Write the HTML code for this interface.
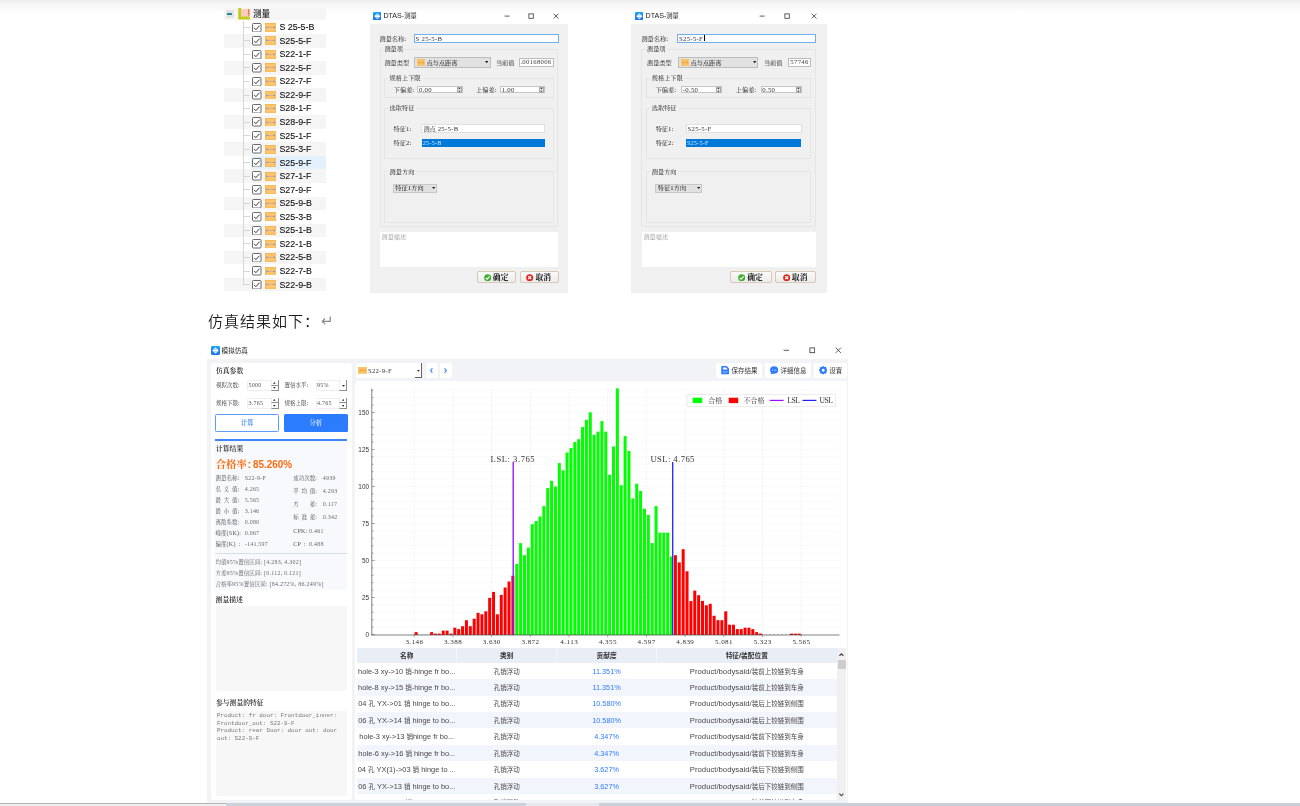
<!DOCTYPE html>
<html lang="zh-CN"><head><meta charset="utf-8"><title>仿真结果</title>
<style>
html,body{margin:0;padding:0;background:#fff;}
body{width:1300px;height:806px;position:relative;overflow:hidden;font-family:"Liberation Sans","Noto Sans CJK SC",sans-serif;}
#page{will-change:transform;position:absolute;left:0;top:0;width:1300px;height:806px;overflow:hidden;background:linear-gradient(#eeeeee 0,#f5f5f5 4px,#fbfbfb 9px,#fff 14px);}
#page div,#page span,#page svg{position:absolute;box-sizing:border-box;}
.t{white-space:nowrap;margin:0;padding:0;}
.fs{font-family:"Liberation Sans","Noto Sans CJK SC",sans-serif;}
.fr{font-family:"Liberation Serif","Noto Serif CJK SC",serif;}
.fm{font-family:"Liberation Mono","Noto Sans CJK SC",monospace;}
#page .a{position:static;}
.fr .a{font-size:1.09em;letter-spacing:0.04em;vertical-align:-0.03em;}
.fs .a{font-size:1.13em;}
.tb .a{font-size:1.19em;}
.tb .c1 .a{font-size:1.14em;}
.tb .c3 .a{font-size:1.12em;}
</style></head><body><div id="page">

<!-- measurement tree -->
<div style="left:224.20px;top:7.80px;width:102.30px;height:12.70px;background:#f5f5f5;"></div>
<div style="left:225.70px;top:10.30px;width:8.20px;height:8.00px;background:#e2e2e2;border-radius:1.2px;"></div>
<div style="left:227.30px;top:12.90px;width:5.20px;height:2.10px;background:#1b8a9d;border-radius:0.5px;"></div>
<svg style="left:238px;top:8.2px;width:12.4px;height:11.6px" viewBox="0 0 12.4 11.6"><rect x="2.8" y="1" width="8.6" height="7.8" fill="#fccbbd"/><path d="M0.2 0 H3.1 V8.6 H12.2 V11.4 H0.2 Z" fill="#c3cd1c"/><rect x="10.2" y="1" width="1.3" height="6.6" fill="#ee6a3c"/></svg>
<span class="t fs" style="top:8.28px;font-size:8.6px;line-height:12.04px;color:#222;left:253.00px;font-weight:500;">测量</span>
<div style="left:224.20px;top:34.04px;width:102.30px;height:13.54px;background:#f5f5f5;"></div>
<div style="left:224.20px;top:61.12px;width:102.30px;height:13.54px;background:#f5f5f5;"></div>
<div style="left:224.20px;top:88.20px;width:102.30px;height:13.54px;background:#f5f5f5;"></div>
<div style="left:224.20px;top:115.28px;width:102.30px;height:13.54px;background:#f5f5f5;"></div>
<div style="left:224.20px;top:142.36px;width:102.30px;height:13.54px;background:#f5f5f5;"></div>
<div style="left:251.20px;top:155.90px;width:75.30px;height:13.54px;background:#e3f1fd;"></div>
<div style="left:224.20px;top:169.44px;width:102.30px;height:13.54px;background:#f5f5f5;"></div>
<div style="left:224.20px;top:196.52px;width:102.30px;height:13.54px;background:#f5f5f5;"></div>
<div style="left:224.20px;top:223.60px;width:102.30px;height:13.54px;background:#f5f5f5;"></div>
<div style="left:224.20px;top:250.68px;width:102.30px;height:13.54px;background:#f5f5f5;"></div>
<div style="left:224.20px;top:277.76px;width:102.30px;height:13.54px;background:#f5f5f5;"></div>
<div style="left:242.80px;top:20.50px;width:0.90px;height:264.03px;background:#d9d5d0;"></div>
<div style="left:243.20px;top:26.82px;width:7.20px;height:0.90px;background:#d9d5d0;"></div>
<svg style="left:252.1px;top:22.52px;width:9.5px;height:9.5px" viewBox="0 0 9.5 9.5"><rect x="0.5" y="0.5" width="8.5" height="8.5" rx="0.8" fill="#fff" stroke="#5a5a5a" stroke-width="0.9"/><path d="M2.1 4.9 L3.9 6.7 L7.5 2.7" fill="none" stroke="#333" stroke-width="1"/></svg>
<svg style="left:264.7px;top:22.87px;width:11.3px;height:8.8px" viewBox="0 0 11.3 8.8"><rect x="0" y="0" width="11.3" height="8.8" fill="#fdc56c"/><rect x="0.3" y="0.3" width="10.7" height="8.2" fill="none" stroke="#f3ad45" stroke-width="0.6"/><path d="M2.6 4.4 H8.7" stroke="#a99ac0" stroke-width="0.6"/><path d="M1.5 3.2 L3.2 4.4 L1.5 5.6 Z M9.8 3.2 L8.1 4.4 L9.8 5.6 Z" fill="#8f86c8"/></svg>
<span class="t fs" style="top:21.24px;font-size:8.9px;line-height:12.46px;color:#101010;left:279.40px;-webkit-text-stroke:0.1px #101010;">S 25-5-B</span>
<div style="left:243.20px;top:40.36px;width:7.20px;height:0.90px;background:#d9d5d0;"></div>
<svg style="left:252.1px;top:36.06px;width:9.5px;height:9.5px" viewBox="0 0 9.5 9.5"><rect x="0.5" y="0.5" width="8.5" height="8.5" rx="0.8" fill="#fff" stroke="#5a5a5a" stroke-width="0.9"/><path d="M2.1 4.9 L3.9 6.7 L7.5 2.7" fill="none" stroke="#333" stroke-width="1"/></svg>
<svg style="left:264.7px;top:36.41px;width:11.3px;height:8.8px" viewBox="0 0 11.3 8.8"><rect x="0" y="0" width="11.3" height="8.8" fill="#fdc56c"/><rect x="0.3" y="0.3" width="10.7" height="8.2" fill="none" stroke="#f3ad45" stroke-width="0.6"/><path d="M2.6 4.4 H8.7" stroke="#a99ac0" stroke-width="0.6"/><path d="M1.5 3.2 L3.2 4.4 L1.5 5.6 Z M9.8 3.2 L8.1 4.4 L9.8 5.6 Z" fill="#8f86c8"/></svg>
<span class="t fs" style="top:34.78px;font-size:8.9px;line-height:12.46px;color:#101010;left:279.40px;-webkit-text-stroke:0.1px #101010;">S25-5-F</span>
<div style="left:243.20px;top:53.90px;width:7.20px;height:0.90px;background:#d9d5d0;"></div>
<svg style="left:252.1px;top:49.60px;width:9.5px;height:9.5px" viewBox="0 0 9.5 9.5"><rect x="0.5" y="0.5" width="8.5" height="8.5" rx="0.8" fill="#fff" stroke="#5a5a5a" stroke-width="0.9"/><path d="M2.1 4.9 L3.9 6.7 L7.5 2.7" fill="none" stroke="#333" stroke-width="1"/></svg>
<svg style="left:264.7px;top:49.95px;width:11.3px;height:8.8px" viewBox="0 0 11.3 8.8"><rect x="0" y="0" width="11.3" height="8.8" fill="#fdc56c"/><rect x="0.3" y="0.3" width="10.7" height="8.2" fill="none" stroke="#f3ad45" stroke-width="0.6"/><path d="M2.6 4.4 H8.7" stroke="#a99ac0" stroke-width="0.6"/><path d="M1.5 3.2 L3.2 4.4 L1.5 5.6 Z M9.8 3.2 L8.1 4.4 L9.8 5.6 Z" fill="#8f86c8"/></svg>
<span class="t fs" style="top:48.32px;font-size:8.9px;line-height:12.46px;color:#101010;left:279.40px;-webkit-text-stroke:0.1px #101010;">S22-1-F</span>
<div style="left:243.20px;top:67.44px;width:7.20px;height:0.90px;background:#d9d5d0;"></div>
<svg style="left:252.1px;top:63.14px;width:9.5px;height:9.5px" viewBox="0 0 9.5 9.5"><rect x="0.5" y="0.5" width="8.5" height="8.5" rx="0.8" fill="#fff" stroke="#5a5a5a" stroke-width="0.9"/><path d="M2.1 4.9 L3.9 6.7 L7.5 2.7" fill="none" stroke="#333" stroke-width="1"/></svg>
<svg style="left:264.7px;top:63.49px;width:11.3px;height:8.8px" viewBox="0 0 11.3 8.8"><rect x="0" y="0" width="11.3" height="8.8" fill="#fdc56c"/><rect x="0.3" y="0.3" width="10.7" height="8.2" fill="none" stroke="#f3ad45" stroke-width="0.6"/><path d="M2.6 4.4 H8.7" stroke="#a99ac0" stroke-width="0.6"/><path d="M1.5 3.2 L3.2 4.4 L1.5 5.6 Z M9.8 3.2 L8.1 4.4 L9.8 5.6 Z" fill="#8f86c8"/></svg>
<span class="t fs" style="top:61.86px;font-size:8.9px;line-height:12.46px;color:#101010;left:279.40px;-webkit-text-stroke:0.1px #101010;">S22-5-F</span>
<div style="left:243.20px;top:80.98px;width:7.20px;height:0.90px;background:#d9d5d0;"></div>
<svg style="left:252.1px;top:76.68px;width:9.5px;height:9.5px" viewBox="0 0 9.5 9.5"><rect x="0.5" y="0.5" width="8.5" height="8.5" rx="0.8" fill="#fff" stroke="#5a5a5a" stroke-width="0.9"/><path d="M2.1 4.9 L3.9 6.7 L7.5 2.7" fill="none" stroke="#333" stroke-width="1"/></svg>
<svg style="left:264.7px;top:77.03px;width:11.3px;height:8.8px" viewBox="0 0 11.3 8.8"><rect x="0" y="0" width="11.3" height="8.8" fill="#fdc56c"/><rect x="0.3" y="0.3" width="10.7" height="8.2" fill="none" stroke="#f3ad45" stroke-width="0.6"/><path d="M2.6 4.4 H8.7" stroke="#a99ac0" stroke-width="0.6"/><path d="M1.5 3.2 L3.2 4.4 L1.5 5.6 Z M9.8 3.2 L8.1 4.4 L9.8 5.6 Z" fill="#8f86c8"/></svg>
<span class="t fs" style="top:75.40px;font-size:8.9px;line-height:12.46px;color:#101010;left:279.40px;-webkit-text-stroke:0.1px #101010;">S22-7-F</span>
<div style="left:243.20px;top:94.52px;width:7.20px;height:0.90px;background:#d9d5d0;"></div>
<svg style="left:252.1px;top:90.22px;width:9.5px;height:9.5px" viewBox="0 0 9.5 9.5"><rect x="0.5" y="0.5" width="8.5" height="8.5" rx="0.8" fill="#fff" stroke="#5a5a5a" stroke-width="0.9"/><path d="M2.1 4.9 L3.9 6.7 L7.5 2.7" fill="none" stroke="#333" stroke-width="1"/></svg>
<svg style="left:264.7px;top:90.57px;width:11.3px;height:8.8px" viewBox="0 0 11.3 8.8"><rect x="0" y="0" width="11.3" height="8.8" fill="#fdc56c"/><rect x="0.3" y="0.3" width="10.7" height="8.2" fill="none" stroke="#f3ad45" stroke-width="0.6"/><path d="M2.6 4.4 H8.7" stroke="#a99ac0" stroke-width="0.6"/><path d="M1.5 3.2 L3.2 4.4 L1.5 5.6 Z M9.8 3.2 L8.1 4.4 L9.8 5.6 Z" fill="#8f86c8"/></svg>
<span class="t fs" style="top:88.94px;font-size:8.9px;line-height:12.46px;color:#101010;left:279.40px;-webkit-text-stroke:0.1px #101010;">S22-9-F</span>
<div style="left:243.20px;top:108.06px;width:7.20px;height:0.90px;background:#d9d5d0;"></div>
<svg style="left:252.1px;top:103.76px;width:9.5px;height:9.5px" viewBox="0 0 9.5 9.5"><rect x="0.5" y="0.5" width="8.5" height="8.5" rx="0.8" fill="#fff" stroke="#5a5a5a" stroke-width="0.9"/><path d="M2.1 4.9 L3.9 6.7 L7.5 2.7" fill="none" stroke="#333" stroke-width="1"/></svg>
<svg style="left:264.7px;top:104.11px;width:11.3px;height:8.8px" viewBox="0 0 11.3 8.8"><rect x="0" y="0" width="11.3" height="8.8" fill="#fdc56c"/><rect x="0.3" y="0.3" width="10.7" height="8.2" fill="none" stroke="#f3ad45" stroke-width="0.6"/><path d="M2.6 4.4 H8.7" stroke="#a99ac0" stroke-width="0.6"/><path d="M1.5 3.2 L3.2 4.4 L1.5 5.6 Z M9.8 3.2 L8.1 4.4 L9.8 5.6 Z" fill="#8f86c8"/></svg>
<span class="t fs" style="top:102.48px;font-size:8.9px;line-height:12.46px;color:#101010;left:279.40px;-webkit-text-stroke:0.1px #101010;">S28-1-F</span>
<div style="left:243.20px;top:121.60px;width:7.20px;height:0.90px;background:#d9d5d0;"></div>
<svg style="left:252.1px;top:117.30px;width:9.5px;height:9.5px" viewBox="0 0 9.5 9.5"><rect x="0.5" y="0.5" width="8.5" height="8.5" rx="0.8" fill="#fff" stroke="#5a5a5a" stroke-width="0.9"/><path d="M2.1 4.9 L3.9 6.7 L7.5 2.7" fill="none" stroke="#333" stroke-width="1"/></svg>
<svg style="left:264.7px;top:117.65px;width:11.3px;height:8.8px" viewBox="0 0 11.3 8.8"><rect x="0" y="0" width="11.3" height="8.8" fill="#fdc56c"/><rect x="0.3" y="0.3" width="10.7" height="8.2" fill="none" stroke="#f3ad45" stroke-width="0.6"/><path d="M2.6 4.4 H8.7" stroke="#a99ac0" stroke-width="0.6"/><path d="M1.5 3.2 L3.2 4.4 L1.5 5.6 Z M9.8 3.2 L8.1 4.4 L9.8 5.6 Z" fill="#8f86c8"/></svg>
<span class="t fs" style="top:116.02px;font-size:8.9px;line-height:12.46px;color:#101010;left:279.40px;-webkit-text-stroke:0.1px #101010;">S28-9-F</span>
<div style="left:243.20px;top:135.14px;width:7.20px;height:0.90px;background:#d9d5d0;"></div>
<svg style="left:252.1px;top:130.84px;width:9.5px;height:9.5px" viewBox="0 0 9.5 9.5"><rect x="0.5" y="0.5" width="8.5" height="8.5" rx="0.8" fill="#fff" stroke="#5a5a5a" stroke-width="0.9"/><path d="M2.1 4.9 L3.9 6.7 L7.5 2.7" fill="none" stroke="#333" stroke-width="1"/></svg>
<svg style="left:264.7px;top:131.19px;width:11.3px;height:8.8px" viewBox="0 0 11.3 8.8"><rect x="0" y="0" width="11.3" height="8.8" fill="#fdc56c"/><rect x="0.3" y="0.3" width="10.7" height="8.2" fill="none" stroke="#f3ad45" stroke-width="0.6"/><path d="M2.6 4.4 H8.7" stroke="#a99ac0" stroke-width="0.6"/><path d="M1.5 3.2 L3.2 4.4 L1.5 5.6 Z M9.8 3.2 L8.1 4.4 L9.8 5.6 Z" fill="#8f86c8"/></svg>
<span class="t fs" style="top:129.56px;font-size:8.9px;line-height:12.46px;color:#101010;left:279.40px;-webkit-text-stroke:0.1px #101010;">S25-1-F</span>
<div style="left:243.20px;top:148.68px;width:7.20px;height:0.90px;background:#d9d5d0;"></div>
<svg style="left:252.1px;top:144.38px;width:9.5px;height:9.5px" viewBox="0 0 9.5 9.5"><rect x="0.5" y="0.5" width="8.5" height="8.5" rx="0.8" fill="#fff" stroke="#5a5a5a" stroke-width="0.9"/><path d="M2.1 4.9 L3.9 6.7 L7.5 2.7" fill="none" stroke="#333" stroke-width="1"/></svg>
<svg style="left:264.7px;top:144.73px;width:11.3px;height:8.8px" viewBox="0 0 11.3 8.8"><rect x="0" y="0" width="11.3" height="8.8" fill="#fdc56c"/><rect x="0.3" y="0.3" width="10.7" height="8.2" fill="none" stroke="#f3ad45" stroke-width="0.6"/><path d="M2.6 4.4 H8.7" stroke="#a99ac0" stroke-width="0.6"/><path d="M1.5 3.2 L3.2 4.4 L1.5 5.6 Z M9.8 3.2 L8.1 4.4 L9.8 5.6 Z" fill="#8f86c8"/></svg>
<span class="t fs" style="top:143.10px;font-size:8.9px;line-height:12.46px;color:#101010;left:279.40px;-webkit-text-stroke:0.1px #101010;">S25-3-F</span>
<div style="left:243.20px;top:162.22px;width:7.20px;height:0.90px;background:#d9d5d0;"></div>
<svg style="left:252.1px;top:157.92px;width:9.5px;height:9.5px" viewBox="0 0 9.5 9.5"><rect x="0.5" y="0.5" width="8.5" height="8.5" rx="0.8" fill="#fff" stroke="#5a5a5a" stroke-width="0.9"/><path d="M2.1 4.9 L3.9 6.7 L7.5 2.7" fill="none" stroke="#333" stroke-width="1"/></svg>
<svg style="left:264.7px;top:158.27px;width:11.3px;height:8.8px" viewBox="0 0 11.3 8.8"><rect x="0" y="0" width="11.3" height="8.8" fill="#fdc56c"/><rect x="0.3" y="0.3" width="10.7" height="8.2" fill="none" stroke="#f3ad45" stroke-width="0.6"/><path d="M2.6 4.4 H8.7" stroke="#a99ac0" stroke-width="0.6"/><path d="M1.5 3.2 L3.2 4.4 L1.5 5.6 Z M9.8 3.2 L8.1 4.4 L9.8 5.6 Z" fill="#8f86c8"/></svg>
<span class="t fs" style="top:156.64px;font-size:8.9px;line-height:12.46px;color:#101010;left:279.40px;-webkit-text-stroke:0.1px #101010;">S25-9-F</span>
<div style="left:243.20px;top:175.76px;width:7.20px;height:0.90px;background:#d9d5d0;"></div>
<svg style="left:252.1px;top:171.46px;width:9.5px;height:9.5px" viewBox="0 0 9.5 9.5"><rect x="0.5" y="0.5" width="8.5" height="8.5" rx="0.8" fill="#fff" stroke="#5a5a5a" stroke-width="0.9"/><path d="M2.1 4.9 L3.9 6.7 L7.5 2.7" fill="none" stroke="#333" stroke-width="1"/></svg>
<svg style="left:264.7px;top:171.81px;width:11.3px;height:8.8px" viewBox="0 0 11.3 8.8"><rect x="0" y="0" width="11.3" height="8.8" fill="#fdc56c"/><rect x="0.3" y="0.3" width="10.7" height="8.2" fill="none" stroke="#f3ad45" stroke-width="0.6"/><path d="M2.6 4.4 H8.7" stroke="#a99ac0" stroke-width="0.6"/><path d="M1.5 3.2 L3.2 4.4 L1.5 5.6 Z M9.8 3.2 L8.1 4.4 L9.8 5.6 Z" fill="#8f86c8"/></svg>
<span class="t fs" style="top:170.18px;font-size:8.9px;line-height:12.46px;color:#101010;left:279.40px;-webkit-text-stroke:0.1px #101010;">S27-1-F</span>
<div style="left:243.20px;top:189.30px;width:7.20px;height:0.90px;background:#d9d5d0;"></div>
<svg style="left:252.1px;top:185.00px;width:9.5px;height:9.5px" viewBox="0 0 9.5 9.5"><rect x="0.5" y="0.5" width="8.5" height="8.5" rx="0.8" fill="#fff" stroke="#5a5a5a" stroke-width="0.9"/><path d="M2.1 4.9 L3.9 6.7 L7.5 2.7" fill="none" stroke="#333" stroke-width="1"/></svg>
<svg style="left:264.7px;top:185.35px;width:11.3px;height:8.8px" viewBox="0 0 11.3 8.8"><rect x="0" y="0" width="11.3" height="8.8" fill="#fdc56c"/><rect x="0.3" y="0.3" width="10.7" height="8.2" fill="none" stroke="#f3ad45" stroke-width="0.6"/><path d="M2.6 4.4 H8.7" stroke="#a99ac0" stroke-width="0.6"/><path d="M1.5 3.2 L3.2 4.4 L1.5 5.6 Z M9.8 3.2 L8.1 4.4 L9.8 5.6 Z" fill="#8f86c8"/></svg>
<span class="t fs" style="top:183.72px;font-size:8.9px;line-height:12.46px;color:#101010;left:279.40px;-webkit-text-stroke:0.1px #101010;">S27-9-F</span>
<div style="left:243.20px;top:202.84px;width:7.20px;height:0.90px;background:#d9d5d0;"></div>
<svg style="left:252.1px;top:198.54px;width:9.5px;height:9.5px" viewBox="0 0 9.5 9.5"><rect x="0.5" y="0.5" width="8.5" height="8.5" rx="0.8" fill="#fff" stroke="#5a5a5a" stroke-width="0.9"/><path d="M2.1 4.9 L3.9 6.7 L7.5 2.7" fill="none" stroke="#333" stroke-width="1"/></svg>
<svg style="left:264.7px;top:198.89px;width:11.3px;height:8.8px" viewBox="0 0 11.3 8.8"><rect x="0" y="0" width="11.3" height="8.8" fill="#fdc56c"/><rect x="0.3" y="0.3" width="10.7" height="8.2" fill="none" stroke="#f3ad45" stroke-width="0.6"/><path d="M2.6 4.4 H8.7" stroke="#a99ac0" stroke-width="0.6"/><path d="M1.5 3.2 L3.2 4.4 L1.5 5.6 Z M9.8 3.2 L8.1 4.4 L9.8 5.6 Z" fill="#8f86c8"/></svg>
<span class="t fs" style="top:197.26px;font-size:8.9px;line-height:12.46px;color:#101010;left:279.40px;-webkit-text-stroke:0.1px #101010;">S25-9-B</span>
<div style="left:243.20px;top:216.38px;width:7.20px;height:0.90px;background:#d9d5d0;"></div>
<svg style="left:252.1px;top:212.08px;width:9.5px;height:9.5px" viewBox="0 0 9.5 9.5"><rect x="0.5" y="0.5" width="8.5" height="8.5" rx="0.8" fill="#fff" stroke="#5a5a5a" stroke-width="0.9"/><path d="M2.1 4.9 L3.9 6.7 L7.5 2.7" fill="none" stroke="#333" stroke-width="1"/></svg>
<svg style="left:264.7px;top:212.43px;width:11.3px;height:8.8px" viewBox="0 0 11.3 8.8"><rect x="0" y="0" width="11.3" height="8.8" fill="#fdc56c"/><rect x="0.3" y="0.3" width="10.7" height="8.2" fill="none" stroke="#f3ad45" stroke-width="0.6"/><path d="M2.6 4.4 H8.7" stroke="#a99ac0" stroke-width="0.6"/><path d="M1.5 3.2 L3.2 4.4 L1.5 5.6 Z M9.8 3.2 L8.1 4.4 L9.8 5.6 Z" fill="#8f86c8"/></svg>
<span class="t fs" style="top:210.80px;font-size:8.9px;line-height:12.46px;color:#101010;left:279.40px;-webkit-text-stroke:0.1px #101010;">S25-3-B</span>
<div style="left:243.20px;top:229.92px;width:7.20px;height:0.90px;background:#d9d5d0;"></div>
<svg style="left:252.1px;top:225.62px;width:9.5px;height:9.5px" viewBox="0 0 9.5 9.5"><rect x="0.5" y="0.5" width="8.5" height="8.5" rx="0.8" fill="#fff" stroke="#5a5a5a" stroke-width="0.9"/><path d="M2.1 4.9 L3.9 6.7 L7.5 2.7" fill="none" stroke="#333" stroke-width="1"/></svg>
<svg style="left:264.7px;top:225.97px;width:11.3px;height:8.8px" viewBox="0 0 11.3 8.8"><rect x="0" y="0" width="11.3" height="8.8" fill="#fdc56c"/><rect x="0.3" y="0.3" width="10.7" height="8.2" fill="none" stroke="#f3ad45" stroke-width="0.6"/><path d="M2.6 4.4 H8.7" stroke="#a99ac0" stroke-width="0.6"/><path d="M1.5 3.2 L3.2 4.4 L1.5 5.6 Z M9.8 3.2 L8.1 4.4 L9.8 5.6 Z" fill="#8f86c8"/></svg>
<span class="t fs" style="top:224.34px;font-size:8.9px;line-height:12.46px;color:#101010;left:279.40px;-webkit-text-stroke:0.1px #101010;">S25-1-B</span>
<div style="left:243.20px;top:243.46px;width:7.20px;height:0.90px;background:#d9d5d0;"></div>
<svg style="left:252.1px;top:239.16px;width:9.5px;height:9.5px" viewBox="0 0 9.5 9.5"><rect x="0.5" y="0.5" width="8.5" height="8.5" rx="0.8" fill="#fff" stroke="#5a5a5a" stroke-width="0.9"/><path d="M2.1 4.9 L3.9 6.7 L7.5 2.7" fill="none" stroke="#333" stroke-width="1"/></svg>
<svg style="left:264.7px;top:239.51px;width:11.3px;height:8.8px" viewBox="0 0 11.3 8.8"><rect x="0" y="0" width="11.3" height="8.8" fill="#fdc56c"/><rect x="0.3" y="0.3" width="10.7" height="8.2" fill="none" stroke="#f3ad45" stroke-width="0.6"/><path d="M2.6 4.4 H8.7" stroke="#a99ac0" stroke-width="0.6"/><path d="M1.5 3.2 L3.2 4.4 L1.5 5.6 Z M9.8 3.2 L8.1 4.4 L9.8 5.6 Z" fill="#8f86c8"/></svg>
<span class="t fs" style="top:237.88px;font-size:8.9px;line-height:12.46px;color:#101010;left:279.40px;-webkit-text-stroke:0.1px #101010;">S22-1-B</span>
<div style="left:243.20px;top:257.00px;width:7.20px;height:0.90px;background:#d9d5d0;"></div>
<svg style="left:252.1px;top:252.70px;width:9.5px;height:9.5px" viewBox="0 0 9.5 9.5"><rect x="0.5" y="0.5" width="8.5" height="8.5" rx="0.8" fill="#fff" stroke="#5a5a5a" stroke-width="0.9"/><path d="M2.1 4.9 L3.9 6.7 L7.5 2.7" fill="none" stroke="#333" stroke-width="1"/></svg>
<svg style="left:264.7px;top:253.05px;width:11.3px;height:8.8px" viewBox="0 0 11.3 8.8"><rect x="0" y="0" width="11.3" height="8.8" fill="#fdc56c"/><rect x="0.3" y="0.3" width="10.7" height="8.2" fill="none" stroke="#f3ad45" stroke-width="0.6"/><path d="M2.6 4.4 H8.7" stroke="#a99ac0" stroke-width="0.6"/><path d="M1.5 3.2 L3.2 4.4 L1.5 5.6 Z M9.8 3.2 L8.1 4.4 L9.8 5.6 Z" fill="#8f86c8"/></svg>
<span class="t fs" style="top:251.42px;font-size:8.9px;line-height:12.46px;color:#101010;left:279.40px;-webkit-text-stroke:0.1px #101010;">S22-5-B</span>
<div style="left:243.20px;top:270.54px;width:7.20px;height:0.90px;background:#d9d5d0;"></div>
<svg style="left:252.1px;top:266.24px;width:9.5px;height:9.5px" viewBox="0 0 9.5 9.5"><rect x="0.5" y="0.5" width="8.5" height="8.5" rx="0.8" fill="#fff" stroke="#5a5a5a" stroke-width="0.9"/><path d="M2.1 4.9 L3.9 6.7 L7.5 2.7" fill="none" stroke="#333" stroke-width="1"/></svg>
<svg style="left:264.7px;top:266.59px;width:11.3px;height:8.8px" viewBox="0 0 11.3 8.8"><rect x="0" y="0" width="11.3" height="8.8" fill="#fdc56c"/><rect x="0.3" y="0.3" width="10.7" height="8.2" fill="none" stroke="#f3ad45" stroke-width="0.6"/><path d="M2.6 4.4 H8.7" stroke="#a99ac0" stroke-width="0.6"/><path d="M1.5 3.2 L3.2 4.4 L1.5 5.6 Z M9.8 3.2 L8.1 4.4 L9.8 5.6 Z" fill="#8f86c8"/></svg>
<span class="t fs" style="top:264.96px;font-size:8.9px;line-height:12.46px;color:#101010;left:279.40px;-webkit-text-stroke:0.1px #101010;">S22-7-B</span>
<div style="left:243.20px;top:284.08px;width:7.20px;height:0.90px;background:#d9d5d0;"></div>
<svg style="left:252.1px;top:279.78px;width:9.5px;height:9.5px" viewBox="0 0 9.5 9.5"><rect x="0.5" y="0.5" width="8.5" height="8.5" rx="0.8" fill="#fff" stroke="#5a5a5a" stroke-width="0.9"/><path d="M2.1 4.9 L3.9 6.7 L7.5 2.7" fill="none" stroke="#333" stroke-width="1"/></svg>
<svg style="left:264.7px;top:280.13px;width:11.3px;height:8.8px" viewBox="0 0 11.3 8.8"><rect x="0" y="0" width="11.3" height="8.8" fill="#fdc56c"/><rect x="0.3" y="0.3" width="10.7" height="8.2" fill="none" stroke="#f3ad45" stroke-width="0.6"/><path d="M2.6 4.4 H8.7" stroke="#a99ac0" stroke-width="0.6"/><path d="M1.5 3.2 L3.2 4.4 L1.5 5.6 Z M9.8 3.2 L8.1 4.4 L9.8 5.6 Z" fill="#8f86c8"/></svg>
<span class="t fs" style="top:278.50px;font-size:8.9px;line-height:12.46px;color:#101010;left:279.40px;-webkit-text-stroke:0.1px #101010;">S22-9-B</span>
<!-- dialog S 25-5-B -->
<div style="left:370.20px;top:8.00px;width:198.00px;height:16.10px;"></div>
<div style="left:370.20px;top:24.10px;width:198.00px;height:268.50px;background:#f0f0f0;"></div>
<svg style="left:372.80px;top:11.50px;width:8.6px;height:8.6px" viewBox="0 0 10 10"><defs><linearGradient id="ig372" x1="0" y1="0" x2="0" y2="1"><stop offset="0" stop-color="#1aa6f7"/><stop offset="1" stop-color="#2470f1"/></linearGradient></defs><rect x="0" y="0" width="10" height="10" rx="1.5" fill="url(#ig372)"/><path d="M1.5 5 L5 1.5 L8.5 5 L5 8.5 Z" fill="#fff" fill-opacity="0.95"/><path d="M3.6 3.6 H6.4 M3.6 6.4 H6.4" stroke="#3d93f5" stroke-width="0.7"/><path d="M2.4 5 H7.6" stroke="#fff" stroke-width="1.5"/></svg>
<span class="t fs" style="top:11.59px;font-size:6.3px;line-height:8.82px;color:#222;left:383.40px;"><span class="a">DTAS-</span>测量</span>
<svg style="left:504.10px;top:12.90px;width:6.2px;height:6.2px" viewBox="-3.1 -3.1 6.2 6.2"><path d="M-2.5 0 H2.5" stroke="#333" stroke-width="0.8"/></svg>
<svg style="left:528.30px;top:12.90px;width:6.2px;height:6.2px" viewBox="-3.1 -3.1 6.2 6.2"><rect x="-2.2" y="-2.2" width="4.4" height="4.4" fill="none" stroke="#333" stroke-width="0.8"/></svg>
<svg style="left:553.30px;top:12.90px;width:6.2px;height:6.2px" viewBox="-3.1 -3.1 6.2 6.2"><path d="M-2.4000000000000004 -2.4000000000000004 L2.4000000000000004 2.4000000000000004 M2.4000000000000004 -2.4000000000000004 L-2.4000000000000004 2.4000000000000004" stroke="#333" stroke-width="0.8"/></svg>
<span class="t fr" style="top:34.62px;font-size:6.2px;line-height:8.68px;color:#1e1e1e;left:379.50px;">测量名称<span class="a">:</span></span>
<div style="left:413.50px;top:33.80px;width:145.00px;height:8.80px;background:#fff;border:1px solid #6fb0ec;"></div>
<span class="t fr" style="top:34.52px;font-size:6.2px;line-height:8.68px;color:#333;left:415.50px;"><span class="a">S 25-5-B</span></span>
<div style="left:379.70px;top:48.60px;width:178.80px;height:178.60px;border:1px solid #e5e5e5;border-radius:1px;"></div>
<div style="left:382.90px;top:44.60px;width:21.60px;height:8.00px;background:#f0f0f0;"></div>
<span class="t fr" style="top:44.82px;font-size:6.2px;line-height:8.68px;color:#1e1e1e;left:384.40px;">测量项</span>
<span class="t fr" style="top:58.92px;font-size:6.2px;line-height:8.68px;color:#1e1e1e;left:384.40px;">测量类型</span>
<div style="left:414.30px;top:57.00px;width:76.40px;height:11.00px;background:#e1e1e1;border:1px solid #bdbdbd;"></div>
<svg style="left:416.70px;top:59.10px;width:8.40px;height:7.00px" viewBox="0 0 11.4 10" preserveAspectRatio="none"><rect x="0" y="0" width="11.4" height="10" fill="#fdc266"/><path d="M2.2 5 H9.2 M2 3.6 L3.4 5 L2 6.4 M9.4 3.6 L8 5 L9.4 6.4" fill="none" stroke="#d98b2b" stroke-width="0.7"/></svg>
<span class="t fr" style="top:58.82px;font-size:6.2px;line-height:8.68px;color:#111;left:426.40px;">点与点距离</span>
<svg style="left:485.10px;top:61.4px;width:3.4px;height:2.4px" viewBox="0 0 3.4 2.4"><path d="M0 0 H3.4 L1.7 2.2 Z" fill="#222"/></svg>
<span class="t fr" style="top:58.92px;font-size:6.2px;line-height:8.68px;color:#1e1e1e;left:495.90px;">当前值</span>
<div style="left:519.30px;top:58.00px;width:34.40px;height:8.70px;background:#fff;border:1px solid #bcbcbc;overflow:hidden;"><span class="t fr" style="right:1.2px;top:-0.6px;font-size:6.2px;line-height:8.68px;color:#444"><span class="a">0.00168006</span></span></div>
<div style="left:384.40px;top:77.70px;width:169.30px;height:20.50px;border:1px solid #e5e5e5;border-radius:1px;"></div>
<div style="left:388.10px;top:73.70px;width:34.00px;height:8.00px;background:#f0f0f0;"></div>
<span class="t fr" style="top:73.92px;font-size:6.2px;line-height:8.68px;color:#1e1e1e;left:389.60px;">规格上下限</span>
<span class="t fr" style="top:86.02px;font-size:6.2px;line-height:8.68px;color:#1e1e1e;left:393.80px;">下偏差<span class="a">:</span></span>
<div style="left:417.20px;top:85.80px;width:45.50px;height:7.70px;background:#fff;border:1px solid #c4c4c4;"></div>
<span class="t fr" style="top:85.87px;font-size:6.2px;line-height:8.68px;color:#333;left:419.00px;"><span class="a">0.00</span></span>
<div style="left:457.10px;top:86.60px;width:4.80px;height:6.10px;background:#e8e8e8;border:0.5px solid #aaa;"></div>
<svg style="left:457.10px;top:85.80px;width:4.8px;height:7.70px" viewBox="0 0 4.8 7.70"><path d="M1.2 3.05 L2.4 1.65 L3.6 3.05 Z M1.2 4.65 L2.4 6.05 L3.6 4.65 Z" fill="#222"/></svg>
<span class="t fr" style="top:86.02px;font-size:6.2px;line-height:8.68px;color:#1e1e1e;left:476.10px;">上偏差<span class="a">:</span></span>
<div style="left:499.90px;top:85.80px;width:44.70px;height:7.70px;background:#fff;border:1px solid #c4c4c4;"></div>
<span class="t fr" style="top:85.87px;font-size:6.2px;line-height:8.68px;color:#333;left:501.70px;"><span class="a">1.00</span></span>
<div style="left:539.00px;top:86.60px;width:4.80px;height:6.10px;background:#e8e8e8;border:0.5px solid #aaa;"></div>
<svg style="left:539.00px;top:85.80px;width:4.8px;height:7.70px" viewBox="0 0 4.8 7.70"><path d="M1.2 3.05 L2.4 1.65 L3.6 3.05 Z M1.2 4.65 L2.4 6.05 L3.6 4.65 Z" fill="#222"/></svg>
<div style="left:384.40px;top:108.00px;width:169.30px;height:50.90px;border:1px solid #e5e5e5;border-radius:1px;"></div>
<div style="left:388.10px;top:104.00px;width:27.80px;height:8.00px;background:#f0f0f0;"></div>
<span class="t fr" style="top:104.22px;font-size:6.2px;line-height:8.68px;color:#1e1e1e;left:389.60px;">选取特征</span>
<span class="t fr" style="top:125.02px;font-size:6.2px;line-height:8.68px;color:#1e1e1e;left:393.50px;">特征<span class="a">1:</span></span>
<div style="left:421.40px;top:124.30px;width:123.20px;height:8.40px;background:#fff;border:1px solid #e0e0e0;"></div>
<span class="t fr" style="top:124.92px;font-size:6.2px;line-height:8.68px;color:#333;left:423.40px;">测点<span class="a"> 25-5-B</span></span>
<span class="t fr" style="top:139.12px;font-size:6.2px;line-height:8.68px;color:#1e1e1e;left:393.50px;">特征<span class="a">2:</span></span>
<div style="left:421.80px;top:139.20px;width:122.80px;height:7.80px;background:#0078d7;"></div>
<span class="t fr" style="top:139.68px;font-size:5.6px;line-height:7.84px;color:#cfe6fb;left:422.80px;"><span class="a">25-5-B</span></span>
<div style="left:384.40px;top:171.30px;width:169.30px;height:51.30px;border:1px solid #e5e5e5;border-radius:1px;"></div>
<div style="left:388.10px;top:167.30px;width:27.80px;height:8.00px;background:#f0f0f0;"></div>
<span class="t fr" style="top:167.52px;font-size:6.2px;line-height:8.68px;color:#1e1e1e;left:389.60px;">测量方向</span>
<div style="left:392.90px;top:183.50px;width:44.50px;height:9.30px;background:#e1e1e1;border:1px solid #c8c8c8;"></div>
<span class="t fr" style="top:184.42px;font-size:6.2px;line-height:8.68px;color:#111;left:395.30px;">特征<span class="a">1</span>方向</span>
<svg style="left:431.80px;top:187.2px;width:3.2px;height:2.2px" viewBox="0 0 3.4 2.4"><path d="M0 0 H3.4 L1.7 2.2 Z" fill="#222"/></svg>
<div style="left:379.90px;top:231.90px;width:178.30px;height:35.40px;background:#fff;"></div>
<span class="t fr" style="top:233.12px;font-size:6.2px;line-height:8.68px;color:#9a9a9a;left:381.50px;">测量描述</span>
<div style="left:476.90px;top:271.30px;width:39.10px;height:12.00px;background:linear-gradient(#fafafa,#ececec);border:1px solid #d8c9b5;border-radius:2px;"></div>
<svg style="left:483.55px;top:273.6px;width:7.4px;height:7.4px" viewBox="0 0 10 10"><circle cx="5" cy="5" r="4.8" fill="#3fae2a"/><path d="M2.4 5.2 L4.3 7 L7.6 3.2" fill="none" stroke="#fff" stroke-width="1.6"/></svg>
<span class="t fr" style="top:273.44px;font-size:7.8px;line-height:10.92px;color:#111;left:492.85px;font-weight:700;">确定</span>
<div style="left:519.50px;top:271.30px;width:39.30px;height:12.00px;background:linear-gradient(#fafafa,#ececec);border:1px solid #d8c9b5;border-radius:2px;"></div>
<svg style="left:526.25px;top:273.6px;width:7.4px;height:7.4px" viewBox="0 0 10 10"><circle cx="5" cy="5" r="4.8" fill="#e2231a"/><path d="M3 3 L7 7 M7 3 L3 7" fill="none" stroke="#fff" stroke-width="1.7"/></svg>
<span class="t fr" style="top:273.44px;font-size:7.8px;line-height:10.92px;color:#111;left:535.55px;font-weight:700;">取消</span>
<!-- dialog S25-5-F -->
<div style="left:631.00px;top:8.00px;width:196.00px;height:16.10px;"></div>
<div style="left:631.00px;top:24.10px;width:196.00px;height:268.50px;background:#f0f0f0;"></div>
<svg style="left:634.50px;top:11.50px;width:8.6px;height:8.6px" viewBox="0 0 10 10"><defs><linearGradient id="ig634" x1="0" y1="0" x2="0" y2="1"><stop offset="0" stop-color="#1aa6f7"/><stop offset="1" stop-color="#2470f1"/></linearGradient></defs><rect x="0" y="0" width="10" height="10" rx="1.5" fill="url(#ig634)"/><path d="M1.5 5 L5 1.5 L8.5 5 L5 8.5 Z" fill="#fff" fill-opacity="0.95"/><path d="M3.6 3.6 H6.4 M3.6 6.4 H6.4" stroke="#3d93f5" stroke-width="0.7"/><path d="M2.4 5 H7.6" stroke="#fff" stroke-width="1.5"/></svg>
<span class="t fs" style="top:11.59px;font-size:6.3px;line-height:8.82px;color:#222;left:645.50px;"><span class="a">DTAS-</span>测量</span>
<svg style="left:758.90px;top:12.90px;width:6.2px;height:6.2px" viewBox="-3.1 -3.1 6.2 6.2"><path d="M-2.5 0 H2.5" stroke="#333" stroke-width="0.8"/></svg>
<svg style="left:784.00px;top:12.90px;width:6.2px;height:6.2px" viewBox="-3.1 -3.1 6.2 6.2"><rect x="-2.2" y="-2.2" width="4.4" height="4.4" fill="none" stroke="#333" stroke-width="0.8"/></svg>
<svg style="left:810.50px;top:12.90px;width:6.2px;height:6.2px" viewBox="-3.1 -3.1 6.2 6.2"><path d="M-2.4000000000000004 -2.4000000000000004 L2.4000000000000004 2.4000000000000004 M2.4000000000000004 -2.4000000000000004 L-2.4000000000000004 2.4000000000000004" stroke="#333" stroke-width="0.8"/></svg>
<span class="t fr" style="top:34.62px;font-size:6.2px;line-height:8.68px;color:#1e1e1e;left:641.40px;">测量名称<span class="a">:</span></span>
<div style="left:677.10px;top:33.80px;width:139.30px;height:8.80px;background:#fff;border:1px solid #6fb0ec;"></div>
<span class="t fr" style="top:34.52px;font-size:6.2px;line-height:8.68px;color:#333;left:679.10px;"><span class="a">S25-5-F</span></span>
<div style="left:703.60px;top:35.20px;width:0.70px;height:6.00px;background:#000;"></div>
<div style="left:641.40px;top:48.60px;width:175.00px;height:178.60px;border:1px solid #e5e5e5;border-radius:1px;"></div>
<div style="left:645.50px;top:44.60px;width:21.60px;height:8.00px;background:#f0f0f0;"></div>
<span class="t fr" style="top:44.82px;font-size:6.2px;line-height:8.68px;color:#1e1e1e;left:647.00px;">测量项</span>
<span class="t fr" style="top:58.92px;font-size:6.2px;line-height:8.68px;color:#1e1e1e;left:647.00px;">测量类型</span>
<div style="left:678.30px;top:57.00px;width:80.00px;height:11.00px;background:#e1e1e1;border:1px solid #bdbdbd;"></div>
<svg style="left:680.70px;top:59.10px;width:8.40px;height:7.00px" viewBox="0 0 11.4 10" preserveAspectRatio="none"><rect x="0" y="0" width="11.4" height="10" fill="#fdc266"/><path d="M2.2 5 H9.2 M2 3.6 L3.4 5 L2 6.4 M9.4 3.6 L8 5 L9.4 6.4" fill="none" stroke="#d98b2b" stroke-width="0.7"/></svg>
<span class="t fr" style="top:58.82px;font-size:6.2px;line-height:8.68px;color:#111;left:690.40px;">点与点距离</span>
<svg style="left:752.70px;top:61.4px;width:3.4px;height:2.4px" viewBox="0 0 3.4 2.4"><path d="M0 0 H3.4 L1.7 2.2 Z" fill="#222"/></svg>
<span class="t fr" style="top:58.92px;font-size:6.2px;line-height:8.68px;color:#1e1e1e;left:763.90px;">当前值</span>
<div style="left:788.40px;top:58.00px;width:22.40px;height:8.70px;background:#fff;border:1px solid #bcbcbc;overflow:hidden;"><span class="t fr" style="right:1.2px;top:-0.6px;font-size:6.2px;line-height:8.68px;color:#444"><span class="a">57746</span></span></div>
<div style="left:646.40px;top:77.70px;width:164.40px;height:20.50px;border:1px solid #e5e5e5;border-radius:1px;"></div>
<div style="left:650.30px;top:73.70px;width:34.00px;height:8.00px;background:#f0f0f0;"></div>
<span class="t fr" style="top:73.92px;font-size:6.2px;line-height:8.68px;color:#1e1e1e;left:651.80px;">规格上下限</span>
<span class="t fr" style="top:86.02px;font-size:6.2px;line-height:8.68px;color:#1e1e1e;left:655.70px;">下偏差<span class="a">:</span></span>
<div style="left:681.00px;top:85.80px;width:40.80px;height:7.70px;background:#fff;border:1px solid #c4c4c4;"></div>
<span class="t fr" style="top:85.87px;font-size:6.2px;line-height:8.68px;color:#333;left:682.80px;"><span class="a">-0.50</span></span>
<div style="left:716.20px;top:86.60px;width:4.80px;height:6.10px;background:#e8e8e8;border:0.5px solid #aaa;"></div>
<svg style="left:716.20px;top:85.80px;width:4.8px;height:7.70px" viewBox="0 0 4.8 7.70"><path d="M1.2 3.05 L2.4 1.65 L3.6 3.05 Z M1.2 4.65 L2.4 6.05 L3.6 4.65 Z" fill="#222"/></svg>
<span class="t fr" style="top:86.02px;font-size:6.2px;line-height:8.68px;color:#1e1e1e;left:735.80px;">上偏差<span class="a">:</span></span>
<div style="left:760.50px;top:85.80px;width:41.00px;height:7.70px;background:#fff;border:1px solid #c4c4c4;"></div>
<span class="t fr" style="top:85.87px;font-size:6.2px;line-height:8.68px;color:#333;left:762.30px;"><span class="a">0.50</span></span>
<div style="left:795.90px;top:86.60px;width:4.80px;height:6.10px;background:#e8e8e8;border:0.5px solid #aaa;"></div>
<svg style="left:795.90px;top:85.80px;width:4.8px;height:7.70px" viewBox="0 0 4.8 7.70"><path d="M1.2 3.05 L2.4 1.65 L3.6 3.05 Z M1.2 4.65 L2.4 6.05 L3.6 4.65 Z" fill="#222"/></svg>
<div style="left:646.40px;top:108.00px;width:164.40px;height:50.90px;border:1px solid #e5e5e5;border-radius:1px;"></div>
<div style="left:650.30px;top:104.00px;width:27.80px;height:8.00px;background:#f0f0f0;"></div>
<span class="t fr" style="top:104.22px;font-size:6.2px;line-height:8.68px;color:#1e1e1e;left:651.80px;">选取特征</span>
<span class="t fr" style="top:125.02px;font-size:6.2px;line-height:8.68px;color:#1e1e1e;left:655.70px;">特征<span class="a">1:</span></span>
<div style="left:685.50px;top:124.30px;width:116.00px;height:8.40px;background:#fff;border:1px solid #e0e0e0;"></div>
<span class="t fr" style="top:124.92px;font-size:6.2px;line-height:8.68px;color:#333;left:687.50px;"><span class="a">S25-5-F</span></span>
<span class="t fr" style="top:139.12px;font-size:6.2px;line-height:8.68px;color:#1e1e1e;left:655.70px;">特征<span class="a">2:</span></span>
<div style="left:685.90px;top:139.20px;width:115.60px;height:7.80px;background:#0078d7;"></div>
<span class="t fr" style="top:139.68px;font-size:5.6px;line-height:7.84px;color:#cfe6fb;left:686.90px;"><span class="a">S25-5-F</span></span>
<div style="left:646.40px;top:171.30px;width:164.40px;height:51.30px;border:1px solid #e5e5e5;border-radius:1px;"></div>
<div style="left:650.30px;top:167.30px;width:27.80px;height:8.00px;background:#f0f0f0;"></div>
<span class="t fr" style="top:167.52px;font-size:6.2px;line-height:8.68px;color:#1e1e1e;left:651.80px;">测量方向</span>
<div style="left:655.40px;top:183.50px;width:46.90px;height:9.30px;background:#e1e1e1;border:1px solid #c8c8c8;"></div>
<span class="t fr" style="top:184.42px;font-size:6.2px;line-height:8.68px;color:#111;left:657.80px;">特征<span class="a">1</span>方向</span>
<svg style="left:696.70px;top:187.2px;width:3.2px;height:2.2px" viewBox="0 0 3.4 2.4"><path d="M0 0 H3.4 L1.7 2.2 Z" fill="#222"/></svg>
<div style="left:641.80px;top:231.90px;width:174.00px;height:35.40px;background:#fff;"></div>
<span class="t fr" style="top:233.12px;font-size:6.2px;line-height:8.68px;color:#9a9a9a;left:643.40px;">测量描述</span>
<div style="left:729.80px;top:271.30px;width:41.90px;height:12.00px;background:linear-gradient(#fafafa,#ececec);border:1px solid #d8c9b5;border-radius:2px;"></div>
<svg style="left:737.85px;top:273.6px;width:7.4px;height:7.4px" viewBox="0 0 10 10"><circle cx="5" cy="5" r="4.8" fill="#3fae2a"/><path d="M2.4 5.2 L4.3 7 L7.6 3.2" fill="none" stroke="#fff" stroke-width="1.6"/></svg>
<span class="t fr" style="top:273.44px;font-size:7.8px;line-height:10.92px;color:#111;left:747.15px;font-weight:700;">确定</span>
<div style="left:774.50px;top:271.30px;width:41.90px;height:12.00px;background:linear-gradient(#fafafa,#ececec);border:1px solid #d8c9b5;border-radius:2px;"></div>
<svg style="left:782.55px;top:273.6px;width:7.4px;height:7.4px" viewBox="0 0 10 10"><circle cx="5" cy="5" r="4.8" fill="#e2231a"/><path d="M3 3 L7 7 M7 3 L3 7" fill="none" stroke="#fff" stroke-width="1.7"/></svg>
<span class="t fr" style="top:273.44px;font-size:7.8px;line-height:10.92px;color:#111;left:791.85px;font-weight:700;">取消</span>
<!-- caption -->
<p class="t fs" style="position:absolute;left:208.1px;top:310.9px;font-size:15px;letter-spacing:1px;line-height:22.4px;color:#1c1c1c;font-weight:350">仿真结果如下：<span style="position:relative;color:#8c8c8c;font-size:15px;letter-spacing:0;margin-left:0.4px;top:-0.9px;font-weight:400">↵</span></p>
<!-- simulation window -->
<div style="left:207.00px;top:343.00px;width:640.70px;height:15.80px;background:#fff;"></div>
<div style="left:207.00px;top:358.80px;width:640.70px;height:444.20px;background:#f1f3f6;"></div>
<svg style="left:210.70px;top:346.00px;width:9.0px;height:9.0px" viewBox="0 0 10 10"><defs><linearGradient id="ig210" x1="0" y1="0" x2="0" y2="1"><stop offset="0" stop-color="#1aa6f7"/><stop offset="1" stop-color="#2470f1"/></linearGradient></defs><rect x="0" y="0" width="10" height="10" rx="1.5" fill="url(#ig210)"/><path d="M1.5 5 L5 1.5 L8.5 5 L5 8.5 Z" fill="#fff" fill-opacity="0.95"/><path d="M3.6 3.6 H6.4 M3.6 6.4 H6.4" stroke="#3d93f5" stroke-width="0.7"/><path d="M2.4 5 H7.6" stroke="#fff" stroke-width="1.5"/></svg>
<span class="t fs" style="top:346.18px;font-size:6.6px;line-height:9.24px;color:#222;left:221.60px;font-weight:400;">模拟仿真</span>
<svg style="left:783.30px;top:347.00px;width:6.6px;height:6.6px" viewBox="-3.3 -3.3 6.6 6.6"><path d="M-2.6999999999999997 0 H2.6999999999999997" stroke="#333" stroke-width="0.8"/></svg>
<svg style="left:808.50px;top:347.00px;width:6.6px;height:6.6px" viewBox="-3.3 -3.3 6.6 6.6"><rect x="-2.4" y="-2.4" width="4.8" height="4.8" fill="none" stroke="#333" stroke-width="0.8"/></svg>
<svg style="left:835.00px;top:347.00px;width:6.6px;height:6.6px" viewBox="-3.3 -3.3 6.6 6.6"><path d="M-2.5999999999999996 -2.5999999999999996 L2.5999999999999996 2.5999999999999996 M2.5999999999999996 -2.5999999999999996 L-2.5999999999999996 2.5999999999999996" stroke="#333" stroke-width="0.8"/></svg>
<div style="left:210.60px;top:363.00px;width:141.70px;height:437.40px;background:#fff;border-radius:3px;"></div>
<span class="t fr" style="top:366.15px;font-size:6.8px;line-height:9.52px;color:#222;left:216.00px;font-weight:600;">仿真参数</span>
<span class="t fr" style="top:382.34px;font-size:5.5px;line-height:7.70px;color:#383838;left:216.00px;">模拟次数<span class="a">:</span></span>
<div style="left:246.90px;top:380.30px;width:31.60px;height:10.90px;background:#fff;border:0.6px solid #eeeeee;border-radius:1.5px;"></div>
<span class="t fr" style="top:382.39px;font-size:5.5px;line-height:7.70px;color:#555;left:248.50px;"><span class="a">5000</span></span>
<div style="left:270.50px;top:380.30px;width:8.00px;height:5.45px;background:#fff;border-right:0.8px solid #8c8c8c;border-bottom:0.8px solid #8c8c8c;border-left:0.5px solid #ececec;"></div>
<div style="left:270.50px;top:385.75px;width:8.00px;height:5.45px;background:#fff;border-right:0.8px solid #8c8c8c;border-bottom:0.8px solid #8c8c8c;border-left:0.5px solid #ececec;"></div>
<svg style="left:273.10px;top:382.02px;width:2.6px;height:1.8px" viewBox="0 0 3.4 2.4"><path d="M0 2.2 H3.4 L1.7 0 Z" fill="#222"/></svg>
<svg style="left:273.10px;top:387.48px;width:2.6px;height:1.8px" viewBox="0 0 3.4 2.4"><path d="M0 0 H3.4 L1.7 2.2 Z" fill="#222"/></svg>
<span class="t fr" style="top:382.34px;font-size:5.5px;line-height:7.70px;color:#383838;left:284.60px;">置信水平<span class="a">:</span></span>
<div style="left:315.50px;top:380.30px;width:31.80px;height:10.90px;background:#fff;border:0.6px solid #eeeeee;border-radius:1.5px;"></div>
<span class="t fr" style="top:382.39px;font-size:5.5px;line-height:7.70px;color:#555;left:317.10px;"><span class="a">95%</span></span>
<div style="left:339.30px;top:380.30px;width:8.00px;height:10.90px;background:#fff;border-right:0.8px solid #8c8c8c;border-bottom:0.8px solid #8c8c8c;border-left:0.5px solid #ececec;"></div>
<svg style="left:341.70px;top:384.75px;width:3px;height:2px" viewBox="0 0 3.4 2.4"><path d="M0 0 H3.4 L1.7 2.2 Z" fill="#222"/></svg>
<span class="t fr" style="top:399.75px;font-size:5.5px;line-height:7.70px;color:#383838;left:216.00px;">规格下限<span class="a">:</span></span>
<div style="left:246.90px;top:397.70px;width:31.60px;height:10.90px;background:#fff;border:0.6px solid #eeeeee;border-radius:1.5px;"></div>
<span class="t fr" style="top:399.79px;font-size:5.5px;line-height:7.70px;color:#555;left:248.50px;"><span class="a">3.765</span></span>
<div style="left:270.50px;top:397.70px;width:8.00px;height:5.45px;background:#fff;border-right:0.8px solid #8c8c8c;border-bottom:0.8px solid #8c8c8c;border-left:0.5px solid #ececec;"></div>
<div style="left:270.50px;top:403.15px;width:8.00px;height:5.45px;background:#fff;border-right:0.8px solid #8c8c8c;border-bottom:0.8px solid #8c8c8c;border-left:0.5px solid #ececec;"></div>
<svg style="left:273.10px;top:399.43px;width:2.6px;height:1.8px" viewBox="0 0 3.4 2.4"><path d="M0 2.2 H3.4 L1.7 0 Z" fill="#222"/></svg>
<svg style="left:273.10px;top:404.88px;width:2.6px;height:1.8px" viewBox="0 0 3.4 2.4"><path d="M0 0 H3.4 L1.7 2.2 Z" fill="#222"/></svg>
<span class="t fr" style="top:399.75px;font-size:5.5px;line-height:7.70px;color:#383838;left:284.60px;">规格上限<span class="a">:</span></span>
<div style="left:315.50px;top:397.70px;width:31.80px;height:10.90px;background:#fff;border:0.6px solid #eeeeee;border-radius:1.5px;"></div>
<span class="t fr" style="top:399.79px;font-size:5.5px;line-height:7.70px;color:#555;left:317.10px;"><span class="a">4.765</span></span>
<div style="left:339.30px;top:397.70px;width:8.00px;height:5.45px;background:#fff;border-right:0.8px solid #8c8c8c;border-bottom:0.8px solid #8c8c8c;border-left:0.5px solid #ececec;"></div>
<div style="left:339.30px;top:403.15px;width:8.00px;height:5.45px;background:#fff;border-right:0.8px solid #8c8c8c;border-bottom:0.8px solid #8c8c8c;border-left:0.5px solid #ececec;"></div>
<svg style="left:341.90px;top:399.43px;width:2.6px;height:1.8px" viewBox="0 0 3.4 2.4"><path d="M0 2.2 H3.4 L1.7 0 Z" fill="#222"/></svg>
<svg style="left:341.90px;top:404.88px;width:2.6px;height:1.8px" viewBox="0 0 3.4 2.4"><path d="M0 0 H3.4 L1.7 2.2 Z" fill="#222"/></svg>
<div style="left:215.30px;top:414.30px;width:63.70px;height:17.40px;background:#fff;border:1px solid #5c9dff;border-radius:1.5px;"></div>
<span class="t fr" style="top:419.16px;font-size:6.3px;line-height:8.82px;color:#2b7cff;left:247.15px;transform:translateX(-50%);font-weight:600;">计算</span>
<div style="left:284.00px;top:414.30px;width:63.60px;height:17.40px;background:#2b7cff;border-radius:1.5px;"></div>
<span class="t fr" style="top:419.16px;font-size:6.3px;line-height:8.82px;color:#dbe9ff;left:315.80px;transform:translateX(-50%);font-weight:600;">分析</span>
<div style="left:215.30px;top:439.40px;width:132.20px;height:1.30px;background:#3d86ff;"></div>
<div style="left:215.30px;top:440.70px;width:132.20px;height:149.60px;background:#f7f9fc;border-radius:0 0 4px 4px;"></div>
<span class="t fr" style="top:444.09px;font-size:6.9px;line-height:9.66px;color:#222;left:215.80px;font-weight:600;">计算结果</span>
<span class="t fr" style="top:457.72px;font-size:10.3px;line-height:14.42px;color:#ff6a0d;left:215.80px;font-weight:700;">合格率</span>
<span class="t fs" style="top:457.06px;font-size:11.2px;line-height:15.68px;color:#ff6a0d;left:247.60px;font-weight:700;">:</span>
<span class="t fs" style="top:457.06px;font-size:11.2px;line-height:15.68px;color:#ff6a0d;left:253.10px;font-weight:700;transform:scaleX(0.885);transform-origin:0 50%;">85.260%</span>
<span class="t fr" style="top:474.64px;font-size:5.5px;line-height:7.70px;color:#555;left:215.60px;">测量名称<span class="a">:</span></span>
<span class="t fr" style="top:474.64px;font-size:5.5px;line-height:7.70px;color:#6a6a6a;left:244.70px;"><span class="a">S22-9-F</span></span>
<span class="t fr" style="top:485.84px;font-size:5.5px;line-height:7.70px;color:#555;left:215.60px;">名 义 值<span class="a">:</span></span>
<span class="t fr" style="top:485.84px;font-size:5.5px;line-height:7.70px;color:#6a6a6a;left:244.70px;"><span class="a">4.265</span></span>
<span class="t fr" style="top:496.94px;font-size:5.5px;line-height:7.70px;color:#555;left:215.60px;">最 大 值<span class="a">:</span></span>
<span class="t fr" style="top:496.94px;font-size:5.5px;line-height:7.70px;color:#6a6a6a;left:244.70px;"><span class="a">5.565</span></span>
<span class="t fr" style="top:507.75px;font-size:5.5px;line-height:7.70px;color:#555;left:215.60px;">最 小 值<span class="a">:</span></span>
<span class="t fr" style="top:507.75px;font-size:5.5px;line-height:7.70px;color:#6a6a6a;left:244.70px;"><span class="a">3.146</span></span>
<span class="t fr" style="top:518.64px;font-size:5.5px;line-height:7.70px;color:#555;left:215.60px;">离散系数<span class="a">:</span></span>
<span class="t fr" style="top:518.64px;font-size:5.5px;line-height:7.70px;color:#6a6a6a;left:244.70px;"><span class="a">0.080</span></span>
<span class="t fr" style="top:529.85px;font-size:5.5px;line-height:7.70px;color:#555;left:215.60px;">峰度<span class="a">(SK):</span></span>
<span class="t fr" style="top:529.85px;font-size:5.5px;line-height:7.70px;color:#6a6a6a;left:244.70px;"><span class="a">0.067</span></span>
<span class="t fr" style="top:540.94px;font-size:5.5px;line-height:7.70px;color:#555;left:215.60px;">偏度<span class="a">(K)</span> <span class="a">:</span></span>
<span class="t fr" style="top:540.94px;font-size:5.5px;line-height:7.70px;color:#6a6a6a;left:244.70px;"><span class="a">-141.597</span></span>
<span class="t fr" style="top:475.34px;font-size:5.5px;line-height:7.70px;color:#555;left:293.30px;">成功次数<span class="a">:</span></span>
<span class="t fr" style="top:475.34px;font-size:5.5px;line-height:7.70px;color:#6a6a6a;left:322.80px;"><span class="a">4939</span></span>
<span class="t fr" style="top:488.04px;font-size:5.5px;line-height:7.70px;color:#555;left:293.30px;">平 均 值<span class="a">:</span></span>
<span class="t fr" style="top:488.04px;font-size:5.5px;line-height:7.70px;color:#6a6a6a;left:322.80px;"><span class="a">4.293</span></span>
<span class="t fr" style="top:501.04px;font-size:5.5px;line-height:7.70px;color:#555;left:293.30px;">方　　差<span class="a">:</span></span>
<span class="t fr" style="top:501.04px;font-size:5.5px;line-height:7.70px;color:#6a6a6a;left:322.80px;"><span class="a">0.117</span></span>
<span class="t fr" style="top:514.44px;font-size:5.5px;line-height:7.70px;color:#555;left:293.30px;">标 准 差<span class="a">:</span></span>
<span class="t fr" style="top:514.44px;font-size:5.5px;line-height:7.70px;color:#6a6a6a;left:322.80px;"><span class="a">0.342</span></span>
<span class="t fr" style="top:527.54px;font-size:5.5px;line-height:7.70px;color:#555;left:293.30px;"><span class="a">CPK:</span></span>
<span class="t fr" style="top:527.54px;font-size:5.5px;line-height:7.70px;color:#6a6a6a;left:309.00px;"><span class="a">0.461</span></span>
<span class="t fr" style="top:540.54px;font-size:5.5px;line-height:7.70px;color:#555;left:293.30px;"><span class="a">CP</span> <span class="a">:</span></span>
<span class="t fr" style="top:540.54px;font-size:5.5px;line-height:7.70px;color:#6a6a6a;left:309.00px;"><span class="a">0.488</span></span>
<div style="left:215.30px;top:552.90px;width:132.20px;height:1.00px;background:#d9dfe9;"></div>
<span class="t fr" style="top:558.85px;font-size:5.5px;line-height:7.70px;color:#6a6a6a;left:215.60px;">均值<span class="a">95%</span>置信区间<span class="a">: [4.283, 4.302]</span></span>
<span class="t fr" style="top:569.54px;font-size:5.5px;line-height:7.70px;color:#6a6a6a;left:215.60px;">方差<span class="a">95%</span>置信区间<span class="a">: [0.112, 0.121]</span></span>
<span class="t fr" style="top:580.75px;font-size:5.5px;line-height:7.70px;color:#6a6a6a;left:215.60px;">合格率<span class="a">95%</span>置信区间<span class="a">: [84.272%, 86.249%]</span></span>
<span class="t fr" style="top:595.45px;font-size:6.8px;line-height:9.52px;color:#222;left:215.60px;font-weight:600;">测量描述</span>
<div style="left:215.50px;top:606.10px;width:131.90px;height:85.20px;background:#f7f7f7;border-radius:2px;"></div>
<span class="t fr" style="top:697.85px;font-size:6.8px;line-height:9.52px;color:#222;left:216.00px;font-weight:600;">参与测量的特征</span>
<div style="left:215.50px;top:711.10px;width:131.90px;height:84.70px;background:#f7f7f7;border-radius:2px;"></div>
<span class="t fm" style="top:712.37px;font-size:5.9px;line-height:8.26px;color:#7a7a7a;left:216.90px;">Product: fr door: Frontdoor_inner:</span>
<span class="t fm" style="top:719.92px;font-size:5.9px;line-height:8.26px;color:#7a7a7a;left:216.90px;">Frontdoor_out: S22-9-F</span>
<span class="t fm" style="top:727.47px;font-size:5.9px;line-height:8.26px;color:#7a7a7a;left:216.90px;">Product: rear Door: door out: door</span>
<span class="t fm" style="top:735.02px;font-size:5.9px;line-height:8.26px;color:#7a7a7a;left:216.90px;">out: S22-9-F</span>
<div style="left:355.60px;top:363.40px;width:66.30px;height:14.30px;background:#fff;border-radius:1.5px;"></div>
<svg style="left:357.90px;top:367.40px;width:9.00px;height:6.80px" viewBox="0 0 11.4 10" preserveAspectRatio="none"><rect x="0" y="0" width="11.4" height="10" fill="#fdc266"/><path d="M2.2 5 H9.2 M2 3.6 L3.4 5 L2 6.4 M9.4 3.6 L8 5 L9.4 6.4" fill="none" stroke="#d98b2b" stroke-width="0.7"/></svg>
<span class="t fr" style="top:366.92px;font-size:6.2px;line-height:8.68px;color:#333;left:367.90px;"><span class="a">S22-9-F</span></span>
<div style="left:415.10px;top:363.40px;width:6.80px;height:14.30px;background:#fff;border-right:0.9px solid #666;border-bottom:0.9px solid #666;"></div>
<svg style="left:417.0px;top:369.6px;width:2.8px;height:2px" viewBox="0 0 3.4 2.4"><path d="M0 0 H3.4 L1.7 2.2 Z" fill="#222"/></svg>
<div style="left:425.50px;top:363.40px;width:12.30px;height:14.30px;background:#fff;border-radius:2px;"></div>
<svg style="left:430.10px;top:368.0px;width:3px;height:5.2px" viewBox="0 0 3 5.2"><path d="M2.4 0.4 L0.6 2.6 L2.4 4.8" fill="none" stroke="#3d86ff" stroke-width="1.15"/></svg>
<div style="left:439.80px;top:363.40px;width:12.30px;height:14.30px;background:#fff;border-radius:2px;"></div>
<svg style="left:444.40px;top:368.0px;width:3px;height:5.2px" viewBox="0 0 3 5.2"><path d="M0.6 0.4 L2.4 2.6 L0.6 4.8" fill="none" stroke="#3d86ff" stroke-width="1.15"/></svg>
<div style="left:716.30px;top:363.40px;width:45.70px;height:14.20px;background:#fff;border-radius:2px;"></div>
<svg style="left:721.10px;top:366.4px;width:8.4px;height:8.4px" viewBox="0 0 10 10"><path d="M1.1 0.9 H6.4 L8.9 3.4 V9.1 H1.1 Z" fill="#2b7cff" stroke="#2b7cff" stroke-width="1.6" stroke-linejoin="round"/><path d="M2.3 1.9 H5.9 L7.7 3.7 V4.3 H2.3 Z" fill="#fff"/><path d="M2.3 6.1 H7.7 V8 H2.3 Z" fill="#fff" fill-opacity="0.35"/></svg>
<span class="t fs" style="top:366.05px;font-size:6.5px;line-height:9.10px;color:#333;left:731.50px;">保存结果</span>
<div style="left:765.20px;top:363.40px;width:45.90px;height:14.20px;background:#fff;border-radius:2px;"></div>
<svg style="left:770.00px;top:366.4px;width:8.4px;height:8.4px" viewBox="0 0 10 10"><ellipse cx="5" cy="4.7" rx="4.9" ry="4.4" fill="#2b7cff"/><path d="M1.4 7 L0.9 9.8 L4.2 8.6 Z" fill="#2b7cff"/><circle cx="3" cy="4.8" r="0.6" fill="#fff"/><circle cx="5" cy="4.8" r="0.6" fill="#fff"/><circle cx="7" cy="4.8" r="0.6" fill="#fff"/></svg>
<span class="t fs" style="top:366.05px;font-size:6.5px;line-height:9.10px;color:#333;left:780.40px;">详细信息</span>
<div style="left:814.00px;top:363.40px;width:32.90px;height:14.20px;background:#fff;border-radius:2px;"></div>
<svg style="left:818.80px;top:366.4px;width:8.4px;height:8.4px" viewBox="0 0 10 10"><circle cx="5" cy="5" r="3.0" fill="none" stroke="#2b7cff" stroke-width="2.5"/><g stroke="#2b7cff" stroke-width="2.1"><path d="M5 0.2 V2 M5 8 V9.8 M0.2 5 H2 M8 5 H9.8 M1.6 1.6 L2.9 2.9 M7.1 7.1 L8.4 8.4 M1.6 8.4 L2.9 7.1 M7.1 2.9 L8.4 1.6"/></g></svg>
<span class="t fs" style="top:366.05px;font-size:6.5px;line-height:9.10px;color:#333;left:829.20px;">设置</span>
<!-- chart panel -->
<div style="left:355.30px;top:381.20px;width:491.60px;height:419.20px;background:#fff;border-radius:3px;"></div>
<svg style="left:355px;top:381px;width:492px;height:267px" viewBox="355 381 492 267" font-family='"Liberation Serif","Noto Serif CJK SC",serif'><g stroke="#efefef" stroke-width="0.6" stroke-dasharray="0.8 0.8"><path d="M371.8 627.10 H839.5"/><path d="M371.8 619.70 H839.5"/><path d="M371.8 612.30 H839.5"/><path d="M371.8 604.90 H839.5"/><path d="M371.8 597.50 H839.5"/><path d="M371.8 590.10 H839.5"/><path d="M371.8 582.70 H839.5"/><path d="M371.8 575.30 H839.5"/><path d="M371.8 567.90 H839.5"/><path d="M371.8 560.50 H839.5"/><path d="M371.8 553.10 H839.5"/><path d="M371.8 545.70 H839.5"/><path d="M371.8 538.30 H839.5"/><path d="M371.8 530.90 H839.5"/><path d="M371.8 523.50 H839.5"/><path d="M371.8 516.10 H839.5"/><path d="M371.8 508.70 H839.5"/><path d="M371.8 501.30 H839.5"/><path d="M371.8 493.90 H839.5"/><path d="M371.8 486.50 H839.5"/><path d="M371.8 479.10 H839.5"/><path d="M371.8 471.70 H839.5"/><path d="M371.8 464.30 H839.5"/><path d="M371.8 456.90 H839.5"/><path d="M371.8 449.50 H839.5"/><path d="M371.8 442.10 H839.5"/><path d="M371.8 434.70 H839.5"/><path d="M371.8 427.30 H839.5"/><path d="M371.8 419.90 H839.5"/><path d="M371.8 412.50 H839.5"/><path d="M371.8 405.10 H839.5"/><path d="M371.8 397.70 H839.5"/><path d="M371.8 390.30 H839.5"/></g><g stroke="#e6e6e6" stroke-width="0.7" stroke-dasharray="0.8 0.8"><path d="M414.20 388.6 V634.5"/><path d="M452.90 388.6 V634.5"/><path d="M491.60 388.6 V634.5"/><path d="M530.30 388.6 V634.5"/><path d="M569.00 388.6 V634.5"/><path d="M607.70 388.6 V634.5"/><path d="M646.40 388.6 V634.5"/><path d="M685.10 388.6 V634.5"/><path d="M723.80 388.6 V634.5"/><path d="M762.50 388.6 V634.5"/><path d="M801.20 388.6 V634.5"/></g><rect x="414.63" y="632.10" width="3.0" height="2.90" fill="#ff0000"/><rect x="430.12" y="632.10" width="3.0" height="2.90" fill="#ff0000"/><rect x="433.99" y="633.60" width="3.0" height="1.40" fill="#ff0000"/><rect x="437.85" y="633.60" width="3.0" height="1.40" fill="#ff0000"/><rect x="441.72" y="630.60" width="3.0" height="4.40" fill="#ff0000"/><rect x="445.59" y="630.60" width="3.0" height="4.40" fill="#ff0000"/><rect x="449.46" y="633.60" width="3.0" height="1.40" fill="#ff0000"/><rect x="453.33" y="627.70" width="3.0" height="7.30" fill="#ff0000"/><rect x="457.20" y="629.10" width="3.0" height="5.90" fill="#ff0000"/><rect x="461.07" y="626.20" width="3.0" height="8.80" fill="#ff0000"/><rect x="464.94" y="620.20" width="3.0" height="14.80" fill="#ff0000"/><rect x="468.81" y="626.20" width="3.0" height="8.80" fill="#ff0000"/><rect x="472.69" y="618.70" width="3.0" height="16.30" fill="#ff0000"/><rect x="476.56" y="612.80" width="3.0" height="22.20" fill="#ff0000"/><rect x="480.43" y="614.30" width="3.0" height="20.70" fill="#ff0000"/><rect x="484.30" y="611.30" width="3.0" height="23.70" fill="#ff0000"/><rect x="488.17" y="597.90" width="3.0" height="37.10" fill="#ff0000"/><rect x="492.04" y="591.90" width="3.0" height="43.10" fill="#ff0000"/><rect x="495.90" y="614.30" width="3.0" height="20.70" fill="#ff0000"/><rect x="499.77" y="594.90" width="3.0" height="40.10" fill="#ff0000"/><rect x="503.64" y="587.50" width="3.0" height="47.50" fill="#ff0000"/><rect x="507.51" y="581.50" width="3.0" height="53.50" fill="#ff0000"/><rect x="511.38" y="575.80" width="3.0" height="59.20" fill="#ff0000"/><rect x="515.25" y="564.00" width="3.0" height="71.00" fill="#00ff00"/><rect x="519.12" y="543.10" width="3.0" height="91.90" fill="#00ff00"/><rect x="522.99" y="555.20" width="3.0" height="79.80" fill="#00ff00"/><rect x="526.86" y="547.60" width="3.0" height="87.40" fill="#00ff00"/><rect x="530.73" y="524.20" width="3.0" height="110.80" fill="#00ff00"/><rect x="534.60" y="521.00" width="3.0" height="114.00" fill="#00ff00"/><rect x="538.47" y="516.50" width="3.0" height="118.50" fill="#00ff00"/><rect x="542.34" y="506.10" width="3.0" height="128.90" fill="#00ff00"/><rect x="546.21" y="488.10" width="3.0" height="146.90" fill="#00ff00"/><rect x="550.08" y="480.80" width="3.0" height="154.20" fill="#00ff00"/><rect x="553.95" y="486.50" width="3.0" height="148.50" fill="#00ff00"/><rect x="557.82" y="463.10" width="3.0" height="171.90" fill="#00ff00"/><rect x="561.69" y="470.30" width="3.0" height="164.70" fill="#00ff00"/><rect x="565.56" y="452.60" width="3.0" height="182.40" fill="#00ff00"/><rect x="569.43" y="448.10" width="3.0" height="186.90" fill="#00ff00"/><rect x="573.30" y="442.10" width="3.0" height="192.90" fill="#00ff00"/><rect x="577.17" y="439.20" width="3.0" height="195.80" fill="#00ff00"/><rect x="581.04" y="427.10" width="3.0" height="207.90" fill="#00ff00"/><rect x="584.91" y="419.80" width="3.0" height="215.20" fill="#00ff00"/><rect x="588.78" y="412.30" width="3.0" height="222.70" fill="#00ff00"/><rect x="592.65" y="434.80" width="3.0" height="200.20" fill="#00ff00"/><rect x="596.52" y="431.60" width="3.0" height="203.40" fill="#00ff00"/><rect x="600.39" y="421.10" width="3.0" height="213.90" fill="#00ff00"/><rect x="604.26" y="431.60" width="3.0" height="203.40" fill="#00ff00"/><rect x="608.13" y="474.80" width="3.0" height="160.20" fill="#00ff00"/><rect x="612.00" y="446.50" width="3.0" height="188.50" fill="#00ff00"/><rect x="615.88" y="388.40" width="3.0" height="246.60" fill="#00ff00"/><rect x="619.74" y="485.20" width="3.0" height="149.80" fill="#00ff00"/><rect x="623.62" y="436.10" width="3.0" height="198.90" fill="#00ff00"/><rect x="627.48" y="451.00" width="3.0" height="184.00" fill="#00ff00"/><rect x="631.35" y="498.50" width="3.0" height="136.50" fill="#00ff00"/><rect x="635.22" y="483.70" width="3.0" height="151.30" fill="#00ff00"/><rect x="639.09" y="491.00" width="3.0" height="144.00" fill="#00ff00"/><rect x="642.96" y="508.70" width="3.0" height="126.30" fill="#00ff00"/><rect x="646.83" y="514.80" width="3.0" height="120.20" fill="#00ff00"/><rect x="650.70" y="543.10" width="3.0" height="91.90" fill="#00ff00"/><rect x="654.57" y="506.10" width="3.0" height="128.90" fill="#00ff00"/><rect x="658.44" y="532.60" width="3.0" height="102.40" fill="#00ff00"/><rect x="662.31" y="532.60" width="3.0" height="102.40" fill="#00ff00"/><rect x="666.18" y="532.60" width="3.0" height="102.40" fill="#00ff00"/><rect x="670.05" y="556.50" width="3.0" height="78.50" fill="#00ff00"/><rect x="673.92" y="555.20" width="3.0" height="79.80" fill="#ff0000"/><rect x="677.79" y="562.40" width="3.0" height="72.60" fill="#ff0000"/><rect x="681.66" y="549.20" width="3.0" height="85.80" fill="#ff0000"/><rect x="685.53" y="571.30" width="3.0" height="63.70" fill="#ff0000"/><rect x="689.40" y="601.10" width="3.0" height="33.90" fill="#ff0000"/><rect x="693.27" y="590.60" width="3.0" height="44.40" fill="#ff0000"/><rect x="697.14" y="595.20" width="3.0" height="39.80" fill="#ff0000"/><rect x="701.01" y="600.90" width="3.0" height="34.10" fill="#ff0000"/><rect x="704.88" y="605.30" width="3.0" height="29.70" fill="#ff0000"/><rect x="708.75" y="603.80" width="3.0" height="31.20" fill="#ff0000"/><rect x="712.62" y="615.75" width="3.0" height="19.25" fill="#ff0000"/><rect x="716.49" y="620.20" width="3.0" height="14.80" fill="#ff0000"/><rect x="720.37" y="620.20" width="3.0" height="14.80" fill="#ff0000"/><rect x="724.23" y="611.30" width="3.0" height="23.70" fill="#ff0000"/><rect x="728.11" y="624.70" width="3.0" height="10.30" fill="#ff0000"/><rect x="731.97" y="624.70" width="3.0" height="10.30" fill="#ff0000"/><rect x="735.85" y="629.10" width="3.0" height="5.90" fill="#ff0000"/><rect x="739.71" y="629.10" width="3.0" height="5.90" fill="#ff0000"/><rect x="743.58" y="627.70" width="3.0" height="7.30" fill="#ff0000"/><rect x="747.45" y="627.70" width="3.0" height="7.30" fill="#ff0000"/><rect x="751.32" y="629.10" width="3.0" height="5.90" fill="#ff0000"/><rect x="755.19" y="632.10" width="3.0" height="2.90" fill="#ff0000"/><rect x="759.06" y="633.60" width="3.0" height="1.40" fill="#ff0000"/><rect x="790.02" y="633.60" width="3.0" height="1.40" fill="#ff0000"/><rect x="793.89" y="633.60" width="3.0" height="1.40" fill="#ff0000"/><rect x="797.76" y="633.60" width="3.0" height="1.40" fill="#ff0000"/><path d="M513.2 461.9 V635.0" stroke="#9a10ff" stroke-width="1.35"/><path d="M672.7 461.9 V635.0" stroke="#2a2aff" stroke-width="1.35"/><path d="M371.8 388.6 V635.4 M371.40000000000003 635.0 H839.5" stroke="#4a4a4a" stroke-width="0.7" fill="none"/><g stroke="#555" stroke-width="0.5"><path d="M371.8 634.50 h3"/><path d="M371.8 627.10 h1.6"/><path d="M371.8 619.70 h1.6"/><path d="M371.8 612.30 h1.6"/><path d="M371.8 604.90 h1.6"/><path d="M371.8 597.50 h3"/><path d="M371.8 590.10 h1.6"/><path d="M371.8 582.70 h1.6"/><path d="M371.8 575.30 h1.6"/><path d="M371.8 567.90 h1.6"/><path d="M371.8 560.50 h3"/><path d="M371.8 553.10 h1.6"/><path d="M371.8 545.70 h1.6"/><path d="M371.8 538.30 h1.6"/><path d="M371.8 530.90 h1.6"/><path d="M371.8 523.50 h3"/><path d="M371.8 516.10 h1.6"/><path d="M371.8 508.70 h1.6"/><path d="M371.8 501.30 h1.6"/><path d="M371.8 493.90 h1.6"/><path d="M371.8 486.50 h3"/><path d="M371.8 479.10 h1.6"/><path d="M371.8 471.70 h1.6"/><path d="M371.8 464.30 h1.6"/><path d="M371.8 456.90 h1.6"/><path d="M371.8 449.50 h3"/><path d="M371.8 442.10 h1.6"/><path d="M371.8 434.70 h1.6"/><path d="M371.8 427.30 h1.6"/><path d="M371.8 419.90 h1.6"/><path d="M371.8 412.50 h3"/><path d="M371.8 405.10 h1.6"/><path d="M371.8 397.70 h1.6"/><path d="M371.8 390.30 h1.6"/><path d="M414.20 635.0 v2.2"/><path d="M452.90 635.0 v2.2"/><path d="M491.60 635.0 v2.2"/><path d="M530.30 635.0 v2.2"/><path d="M569.00 635.0 v2.2"/><path d="M607.70 635.0 v2.2"/><path d="M646.40 635.0 v2.2"/><path d="M685.10 635.0 v2.2"/><path d="M723.80 635.0 v2.2"/><path d="M762.50 635.0 v2.2"/><path d="M801.20 635.0 v2.2"/><path d="M414.20 635.0 v-1.0"/><path d="M418.07 635.0 v-1.0"/><path d="M421.94 635.0 v-1.0"/><path d="M425.81 635.0 v-1.0"/><path d="M429.68 635.0 v-1.0"/><path d="M433.55 635.0 v-1.0"/><path d="M437.42 635.0 v-1.0"/><path d="M441.29 635.0 v-1.0"/><path d="M445.16 635.0 v-1.0"/><path d="M449.03 635.0 v-1.0"/><path d="M452.90 635.0 v-1.0"/><path d="M456.77 635.0 v-1.0"/><path d="M460.64 635.0 v-1.0"/><path d="M464.51 635.0 v-1.0"/><path d="M468.38 635.0 v-1.0"/><path d="M472.25 635.0 v-1.0"/><path d="M476.12 635.0 v-1.0"/><path d="M479.99 635.0 v-1.0"/><path d="M483.86 635.0 v-1.0"/><path d="M487.73 635.0 v-1.0"/><path d="M491.60 635.0 v-1.0"/><path d="M495.47 635.0 v-1.0"/><path d="M499.34 635.0 v-1.0"/><path d="M503.21 635.0 v-1.0"/><path d="M507.08 635.0 v-1.0"/><path d="M510.95 635.0 v-1.0"/><path d="M514.82 635.0 v-1.0"/><path d="M518.69 635.0 v-1.0"/><path d="M522.56 635.0 v-1.0"/><path d="M526.43 635.0 v-1.0"/><path d="M530.30 635.0 v-1.0"/><path d="M534.17 635.0 v-1.0"/><path d="M538.04 635.0 v-1.0"/><path d="M541.91 635.0 v-1.0"/><path d="M545.78 635.0 v-1.0"/><path d="M549.65 635.0 v-1.0"/><path d="M553.52 635.0 v-1.0"/><path d="M557.39 635.0 v-1.0"/><path d="M561.26 635.0 v-1.0"/><path d="M565.13 635.0 v-1.0"/><path d="M569.00 635.0 v-1.0"/><path d="M572.87 635.0 v-1.0"/><path d="M576.74 635.0 v-1.0"/><path d="M580.61 635.0 v-1.0"/><path d="M584.48 635.0 v-1.0"/><path d="M588.35 635.0 v-1.0"/><path d="M592.22 635.0 v-1.0"/><path d="M596.09 635.0 v-1.0"/><path d="M599.96 635.0 v-1.0"/><path d="M603.83 635.0 v-1.0"/><path d="M607.70 635.0 v-1.0"/><path d="M611.57 635.0 v-1.0"/><path d="M615.44 635.0 v-1.0"/><path d="M619.31 635.0 v-1.0"/><path d="M623.18 635.0 v-1.0"/><path d="M627.05 635.0 v-1.0"/><path d="M630.92 635.0 v-1.0"/><path d="M634.79 635.0 v-1.0"/><path d="M638.66 635.0 v-1.0"/><path d="M642.53 635.0 v-1.0"/><path d="M646.40 635.0 v-1.0"/><path d="M650.27 635.0 v-1.0"/><path d="M654.14 635.0 v-1.0"/><path d="M658.01 635.0 v-1.0"/><path d="M661.88 635.0 v-1.0"/><path d="M665.75 635.0 v-1.0"/><path d="M669.62 635.0 v-1.0"/><path d="M673.49 635.0 v-1.0"/><path d="M677.36 635.0 v-1.0"/><path d="M681.23 635.0 v-1.0"/><path d="M685.10 635.0 v-1.0"/><path d="M688.97 635.0 v-1.0"/><path d="M692.84 635.0 v-1.0"/><path d="M696.71 635.0 v-1.0"/><path d="M700.58 635.0 v-1.0"/><path d="M704.45 635.0 v-1.0"/><path d="M708.32 635.0 v-1.0"/><path d="M712.19 635.0 v-1.0"/><path d="M716.06 635.0 v-1.0"/><path d="M719.93 635.0 v-1.0"/><path d="M723.80 635.0 v-1.0"/><path d="M727.67 635.0 v-1.0"/><path d="M731.54 635.0 v-1.0"/><path d="M735.41 635.0 v-1.0"/><path d="M739.28 635.0 v-1.0"/><path d="M743.15 635.0 v-1.0"/><path d="M747.02 635.0 v-1.0"/><path d="M750.89 635.0 v-1.0"/><path d="M754.76 635.0 v-1.0"/><path d="M758.63 635.0 v-1.0"/><path d="M762.50 635.0 v-1.0"/><path d="M766.37 635.0 v-1.0"/><path d="M770.24 635.0 v-1.0"/><path d="M774.11 635.0 v-1.0"/><path d="M777.98 635.0 v-1.0"/><path d="M781.85 635.0 v-1.0"/><path d="M785.72 635.0 v-1.0"/><path d="M789.59 635.0 v-1.0"/><path d="M793.46 635.0 v-1.0"/><path d="M797.33 635.0 v-1.0"/><path d="M801.20 635.0 v-1.0"/></g><text x="369.0" y="637.20" font-size="6.4" text-anchor="end" fill="#333" font-family='"Liberation Sans",sans-serif'>0</text><text x="369.0" y="600.20" font-size="6.4" text-anchor="end" fill="#333" font-family='"Liberation Sans",sans-serif'>25</text><text x="369.0" y="563.20" font-size="6.4" text-anchor="end" fill="#333" font-family='"Liberation Sans",sans-serif'>50</text><text x="369.0" y="526.20" font-size="6.4" text-anchor="end" fill="#333" font-family='"Liberation Sans",sans-serif'>75</text><text x="369.0" y="489.20" font-size="6.4" text-anchor="end" fill="#333" font-family='"Liberation Sans",sans-serif'>100</text><text x="369.0" y="452.20" font-size="6.4" text-anchor="end" fill="#333" font-family='"Liberation Sans",sans-serif'>125</text><text x="369.0" y="415.20" font-size="6.4" text-anchor="end" fill="#333" font-family='"Liberation Sans",sans-serif'>150</text><text x="414.20" y="644.2" font-size="7.1" text-anchor="middle" fill="#333" textLength="17.6" lengthAdjust="spacing">3.146</text><text x="452.90" y="644.2" font-size="7.1" text-anchor="middle" fill="#333" textLength="17.6" lengthAdjust="spacing">3.388</text><text x="491.60" y="644.2" font-size="7.1" text-anchor="middle" fill="#333" textLength="17.6" lengthAdjust="spacing">3.630</text><text x="530.30" y="644.2" font-size="7.1" text-anchor="middle" fill="#333" textLength="17.6" lengthAdjust="spacing">3.872</text><text x="569.00" y="644.2" font-size="7.1" text-anchor="middle" fill="#333" textLength="17.6" lengthAdjust="spacing">4.113</text><text x="607.70" y="644.2" font-size="7.1" text-anchor="middle" fill="#333" textLength="17.6" lengthAdjust="spacing">4.355</text><text x="646.40" y="644.2" font-size="7.1" text-anchor="middle" fill="#333" textLength="17.6" lengthAdjust="spacing">4.597</text><text x="685.10" y="644.2" font-size="7.1" text-anchor="middle" fill="#333" textLength="17.6" lengthAdjust="spacing">4.839</text><text x="723.80" y="644.2" font-size="7.1" text-anchor="middle" fill="#333" textLength="17.6" lengthAdjust="spacing">5.081</text><text x="762.50" y="644.2" font-size="7.1" text-anchor="middle" fill="#333" textLength="17.6" lengthAdjust="spacing">5.323</text><text x="801.20" y="644.2" font-size="7.1" text-anchor="middle" fill="#333" textLength="17.6" lengthAdjust="spacing">5.565</text><text x="490.6" y="461.8" font-size="8.6" fill="#333" textLength="44" lengthAdjust="spacing">LSL: 3.765</text><text x="650.4" y="461.8" font-size="8.6" fill="#333" textLength="44" lengthAdjust="spacing">USL: 4.765</text><rect x="687.2" y="394.3" width="148.2" height="12.3" fill="#fff" fill-opacity="0.85" stroke="#e2e2e2" stroke-width="0.6"/><rect x="692.7" y="397.7" width="9.5" height="5.4" fill="#00ff00"/><text x="708.2" y="403.0" font-size="7" fill="#333">合格</text><rect x="728.7" y="397.7" width="9.5" height="5.4" fill="#ff0000"/><text x="743.6" y="403.0" font-size="7" fill="#333">不合格</text><path d="M769.7 400.4 H783.6" stroke="#9a10ff" stroke-width="1.2"/><text x="787.3" y="403.1" font-size="7.6" fill="#333" letter-spacing="-0.5">LSL</text><path d="M802.5 400.4 H816.4" stroke="#2020ff" stroke-width="1.2"/><text x="819.6" y="403.1" font-size="7.6" fill="#333" letter-spacing="-0.5">USL</text></svg>
<!-- contribution table -->
<div style="left:356.80px;top:648.20px;width:480.10px;height:14.50px;background:#e9edf6;"></div>
<div style="left:456.40px;top:648.20px;width:0.60px;height:14.50px;background:#f3f5fa;"></div>
<div style="left:556.30px;top:648.20px;width:0.60px;height:14.50px;background:#f3f5fa;"></div>
<div style="left:656.30px;top:648.20px;width:0.60px;height:14.50px;background:#f3f5fa;"></div>
<span class="t fs" style="top:650.91px;font-size:6.7px;line-height:9.38px;color:#333;left:406.75px;transform:translateX(-50%);font-weight:700;">名称</span>
<span class="t fs" style="top:650.91px;font-size:6.7px;line-height:9.38px;color:#333;left:506.65px;transform:translateX(-50%);font-weight:700;">类别</span>
<span class="t fs" style="top:650.91px;font-size:6.7px;line-height:9.38px;color:#333;left:606.60px;transform:translateX(-50%);font-weight:700;">贡献度</span>
<span class="t fs" style="top:650.91px;font-size:6.7px;line-height:9.38px;color:#333;left:746.75px;transform:translateX(-50%);font-weight:700;">特征<span class="a">/</span>装配位置</span>
<div style="left:356.8px;top:662.7px;width:480.1px;height:137.3px;overflow:hidden" class="tb">
<span class="t fs c1" style="top:3.95px;font-size:6.5px;line-height:9.10px;color:#484848;left:49.95px;transform:translateX(-50%);"><span class="a">hole-3 xy-&gt;10 </span>销<span class="a">-hinge fr bo...</span></span>
<span class="t fs" style="top:3.95px;font-size:6.5px;line-height:9.10px;color:#484848;left:149.85px;transform:translateX(-50%);">孔销浮动</span>
<span class="t fs c3" style="top:3.95px;font-size:6.5px;line-height:9.10px;color:#2b7cff;left:249.80px;transform:translateX(-50%);"><span class="a">11.351%</span></span>
<span class="t fs" style="top:3.95px;font-size:6.5px;line-height:9.10px;color:#484848;left:389.95px;transform:translateX(-50%);"><span class="a">Product/bodysaid/</span>装前上铰链到车身</span>
<div style="left:0.00px;top:16.43px;width:480.10px;height:16.43px;background:#f3f5fc;"></div>
<span class="t fs c1" style="top:20.38px;font-size:6.5px;line-height:9.10px;color:#484848;left:49.95px;transform:translateX(-50%);"><span class="a">hole-8 xy-&gt;15 </span>销<span class="a">-hinge fr bo...</span></span>
<span class="t fs" style="top:20.38px;font-size:6.5px;line-height:9.10px;color:#484848;left:149.85px;transform:translateX(-50%);">孔销浮动</span>
<span class="t fs c3" style="top:20.38px;font-size:6.5px;line-height:9.10px;color:#2b7cff;left:249.80px;transform:translateX(-50%);"><span class="a">11.351%</span></span>
<span class="t fs" style="top:20.38px;font-size:6.5px;line-height:9.10px;color:#484848;left:389.95px;transform:translateX(-50%);"><span class="a">Product/bodysaid/</span>装前上铰链到车身</span>
<span class="t fs c1" style="top:36.81px;font-size:6.5px;line-height:9.10px;color:#484848;left:49.95px;transform:translateX(-50%);"><span class="a">04 </span>孔<span class="a"> YX-&gt;01 </span>销<span class="a"> hinge to bo...</span></span>
<span class="t fs" style="top:36.81px;font-size:6.5px;line-height:9.10px;color:#484848;left:149.85px;transform:translateX(-50%);">孔销浮动</span>
<span class="t fs c3" style="top:36.81px;font-size:6.5px;line-height:9.10px;color:#2b7cff;left:249.80px;transform:translateX(-50%);"><span class="a">10.580%</span></span>
<span class="t fs" style="top:36.81px;font-size:6.5px;line-height:9.10px;color:#484848;left:389.95px;transform:translateX(-50%);"><span class="a">Product/bodysaid/</span>装后上铰链到侧围</span>
<div style="left:0.00px;top:49.29px;width:480.10px;height:16.43px;background:#f3f5fc;"></div>
<span class="t fs c1" style="top:53.24px;font-size:6.5px;line-height:9.10px;color:#484848;left:49.95px;transform:translateX(-50%);"><span class="a">06 </span>孔<span class="a"> YX-&gt;14 </span>销<span class="a"> hinge to bo...</span></span>
<span class="t fs" style="top:53.24px;font-size:6.5px;line-height:9.10px;color:#484848;left:149.85px;transform:translateX(-50%);">孔销浮动</span>
<span class="t fs c3" style="top:53.24px;font-size:6.5px;line-height:9.10px;color:#2b7cff;left:249.80px;transform:translateX(-50%);"><span class="a">10.580%</span></span>
<span class="t fs" style="top:53.24px;font-size:6.5px;line-height:9.10px;color:#484848;left:389.95px;transform:translateX(-50%);"><span class="a">Product/bodysaid/</span>装后上铰链到侧围</span>
<span class="t fs c1" style="top:69.67px;font-size:6.5px;line-height:9.10px;color:#484848;left:49.95px;transform:translateX(-50%);"><span class="a">hole-3 xy-&gt;13 </span>销<span class="a">hinge fr bo...</span></span>
<span class="t fs" style="top:69.67px;font-size:6.5px;line-height:9.10px;color:#484848;left:149.85px;transform:translateX(-50%);">孔销浮动</span>
<span class="t fs c3" style="top:69.67px;font-size:6.5px;line-height:9.10px;color:#2b7cff;left:249.80px;transform:translateX(-50%);"><span class="a">4.347%</span></span>
<span class="t fs" style="top:69.67px;font-size:6.5px;line-height:9.10px;color:#484848;left:389.95px;transform:translateX(-50%);"><span class="a">Product/bodysaid/</span>装前下铰链到车身</span>
<div style="left:0.00px;top:82.15px;width:480.10px;height:16.43px;background:#f3f5fc;"></div>
<span class="t fs c1" style="top:86.10px;font-size:6.5px;line-height:9.10px;color:#484848;left:49.95px;transform:translateX(-50%);"><span class="a">hole-6 xy-&gt;16 </span>销<span class="a"> hinge fr bo...</span></span>
<span class="t fs" style="top:86.10px;font-size:6.5px;line-height:9.10px;color:#484848;left:149.85px;transform:translateX(-50%);">孔销浮动</span>
<span class="t fs c3" style="top:86.10px;font-size:6.5px;line-height:9.10px;color:#2b7cff;left:249.80px;transform:translateX(-50%);"><span class="a">4.347%</span></span>
<span class="t fs" style="top:86.10px;font-size:6.5px;line-height:9.10px;color:#484848;left:389.95px;transform:translateX(-50%);"><span class="a">Product/bodysaid/</span>装前下铰链到车身</span>
<span class="t fs c1" style="top:102.53px;font-size:6.5px;line-height:9.10px;color:#484848;left:49.95px;transform:translateX(-50%);"><span class="a">04 </span>孔<span class="a"> YX(1)-&gt;03 </span>销<span class="a"> hinge to ...</span></span>
<span class="t fs" style="top:102.53px;font-size:6.5px;line-height:9.10px;color:#484848;left:149.85px;transform:translateX(-50%);">孔销浮动</span>
<span class="t fs c3" style="top:102.53px;font-size:6.5px;line-height:9.10px;color:#2b7cff;left:249.80px;transform:translateX(-50%);"><span class="a">3.627%</span></span>
<span class="t fs" style="top:102.53px;font-size:6.5px;line-height:9.10px;color:#484848;left:389.95px;transform:translateX(-50%);"><span class="a">Product/bodysaid/</span>装后下铰链到侧围</span>
<div style="left:0.00px;top:115.01px;width:480.10px;height:16.43px;background:#f3f5fc;"></div>
<span class="t fs c1" style="top:118.96px;font-size:6.5px;line-height:9.10px;color:#484848;left:49.95px;transform:translateX(-50%);"><span class="a">06 </span>孔<span class="a"> YX-&gt;13 </span>销<span class="a"> hinge to bo...</span></span>
<span class="t fs" style="top:118.96px;font-size:6.5px;line-height:9.10px;color:#484848;left:149.85px;transform:translateX(-50%);">孔销浮动</span>
<span class="t fs c3" style="top:118.96px;font-size:6.5px;line-height:9.10px;color:#2b7cff;left:249.80px;transform:translateX(-50%);"><span class="a">3.627%</span></span>
<span class="t fs" style="top:118.96px;font-size:6.5px;line-height:9.10px;color:#484848;left:389.95px;transform:translateX(-50%);"><span class="a">Product/bodysaid/</span>装后下铰链到侧围</span>
<span class="t fs c1" style="top:135.39px;font-size:6.5px;line-height:9.10px;color:#484848;left:49.95px;transform:translateX(-50%);"><span class="a">hole-3 xy-&gt;12 </span>销<span class="a"> hinge fr bo...</span></span>
<span class="t fs" style="top:135.39px;font-size:6.5px;line-height:9.10px;color:#484848;left:149.85px;transform:translateX(-50%);">孔销浮动</span>
<span class="t fs c3" style="top:135.39px;font-size:6.5px;line-height:9.10px;color:#2b7cff;left:249.80px;transform:translateX(-50%);"><span class="a">2.416%</span></span>
<span class="t fs" style="top:135.39px;font-size:6.5px;line-height:9.10px;color:#484848;left:389.95px;transform:translateX(-50%);"><span class="a">Product/bodysaid/</span>装前下铰链到车身</span>
</div>
<div style="left:836.90px;top:648.20px;width:9.40px;height:151.80px;background:#f0f0f0;"></div>
<svg style="left:839.2px;top:652.6px;width:4.8px;height:3.4px" viewBox="0 0 4.8 3.4"><path d="M0.4 3 L2.4 0.8 L4.4 3" fill="none" stroke="#404040" stroke-width="1.1"/></svg>
<div style="left:837.60px;top:659.60px;width:8.00px;height:9.20px;background:#cdcdcd;"></div>
<svg style="left:839.2px;top:793.4px;width:4.8px;height:3.4px" viewBox="0 0 4.8 3.4"><path d="M0.4 0.6 L2.4 2.8 L4.4 0.6" fill="none" stroke="#404040" stroke-width="1.1"/></svg>
<!-- bottom strip -->
<div style="left:0.00px;top:803.00px;width:226.00px;height:3.00px;background:#efefef;border-top:1px solid #b4b4b4;"></div>
<div style="left:226.00px;top:802.90px;width:300.00px;height:3.10px;background:#cbd2db;"></div>
<div style="left:526.00px;top:802.90px;width:73.00px;height:3.10px;background:#e6e9ee;"></div>
<div style="left:599.00px;top:802.90px;width:701.00px;height:3.10px;background:#c9d0d9;"></div>
</div></body></html>
